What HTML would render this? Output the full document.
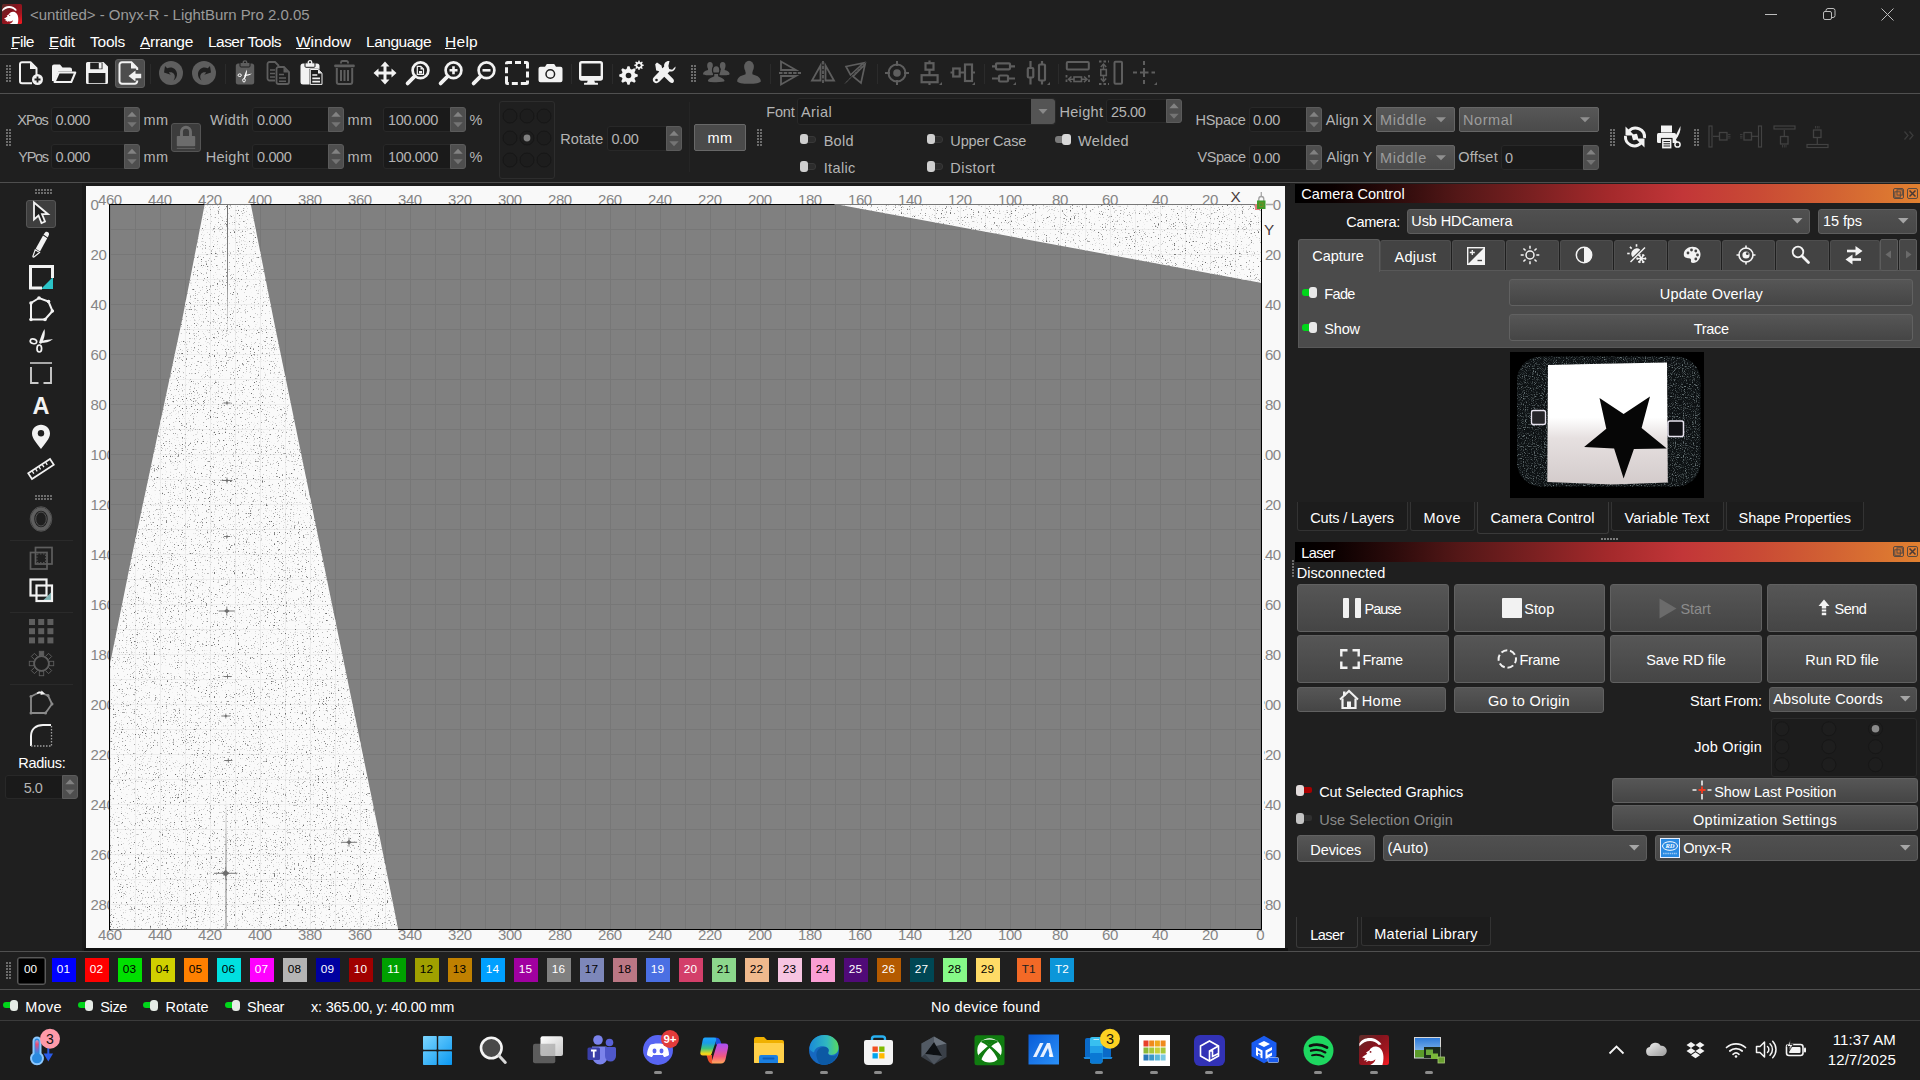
<!DOCTYPE html>
<html><head><meta charset="utf-8"><title>LightBurn</title>
<style>
html,body{margin:0;padding:0;background:#1f1f1f;}
body{width:1920px;height:1080px;position:relative;overflow:hidden;font-family:"Liberation Sans",sans-serif;}
#root{position:absolute;left:0;top:0;width:1920px;height:1080px;overflow:hidden;background:#1f1f1f;}
#root div,#root span.t,#root svg{position:absolute;box-sizing:border-box;}
span.t{white-space:nowrap;display:block;}
#root svg{overflow:visible;}
.hl{background:#505050;height:1px;}
.inp{background:#1a1a1a;border:1px solid #282828;border-radius:3px;}
.spin{background:#484848;border-radius:0 3px 3px 0;}
.btn{background:#444444;border:1px solid #5c5c5c;border-radius:2px;}
.cmb{background:#4a4a4a;border:1px solid #5a5a5a;border-radius:2px;}
</style></head><body><div id="root">

<span class="t" style="left:30px;top:4.50px;height:20px;line-height:20px;font-size:15px;color:#9a9a9a;letter-spacing:-0.035px;">&lt;untitled&gt; - Onyx-R - LightBurn Pro 2.0.05</span>
<svg style="left:1760px;top:4px" width="150" height="22" viewBox="0 0 150 22"><g stroke="#bdbdbd" stroke-width="1" fill="none"><path d="M5 10.5h12"/><rect x="63.5" y="7.5" width="8" height="8" rx="1.5"/><path d="M66 7.5v-1a2 2 0 0 1 2-2h5a2 2 0 0 1 2 2v5a2 2 0 0 1-2 2h-1"/><path d="M121.5 4.5l12 12M133.5 4.5l-12 12"/></g></svg>
<svg style="left:2px;top:4px;" width="20" height="20" viewBox="0 0 20 20"><defs><linearGradient id="lbg1" x1="0" y1="0" x2="1" y2="1"><stop offset="0" stop-color="#5c2e2a"/><stop offset="0.4" stop-color="#84141e"/><stop offset="0.7" stop-color="#a4161f"/><stop offset="1" stop-color="#ff1a22"/></linearGradient></defs><rect x="0" y="0" width="20" height="20" rx="1.500" fill="url(#lbg1)"/><path d="M0.200 5.800C2.500 1 11 0.300 15 6.200L13.200 6.700C10 2.800 4 3 0.300 7.500z" fill="#fff"/><path d="M2 14.800l3.500-2.300-0.800-0.800 2.300-1.500c0.500-1.500 2.500-2.800 4.500-2.500 3.500 0.500 5 4 4.800 8 0 1.500-0.300 3-0.700 4.300H7.500c2-1 3.200-2 3.500-3.800-1.500 1.200-3 1.500-4.500 1l-1.800 0.800 0.500-1.300-2 0.300 1-1.300z" fill="#fff"/><circle cx="7.700" cy="11.300" r="0.600" fill="#8a1520"/></svg>
<span class="t" style="left:11px;top:31.50px;height:20px;line-height:20px;font-size:15.5px;color:#ffffff;letter-spacing:-0.494px;">File</span>
<span class="t" style="left:49px;top:31.50px;height:20px;line-height:20px;font-size:15.5px;color:#ffffff;letter-spacing:-0.177px;">Edit</span>
<span class="t" style="left:90px;top:31.50px;height:20px;line-height:20px;font-size:15.5px;color:#ffffff;letter-spacing:-0.237px;">Tools</span>
<span class="t" style="left:140px;top:31.50px;height:20px;line-height:20px;font-size:15.5px;color:#ffffff;letter-spacing:-0.306px;">Arrange</span>
<span class="t" style="left:208px;top:31.50px;height:20px;line-height:20px;font-size:15.5px;color:#ffffff;letter-spacing:-0.543px;">Laser Tools</span>
<span class="t" style="left:296px;top:31.50px;height:20px;line-height:20px;font-size:15.5px;color:#ffffff;letter-spacing:-0.021px;">Window</span>
<span class="t" style="left:366px;top:31.50px;height:20px;line-height:20px;font-size:15.5px;color:#ffffff;letter-spacing:-0.494px;">Language</span>
<span class="t" style="left:445px;top:31.50px;height:20px;line-height:20px;font-size:15.5px;color:#ffffff;letter-spacing:0.281px;">Help</span>
<div style="left:11px;top:48px;width:7px;height:1px;background:#fff;"></div>
<div style="left:49px;top:48px;width:9px;height:1px;background:#fff;"></div>
<div style="left:140px;top:48px;width:10px;height:1px;background:#fff;"></div>
<div style="left:296px;top:48px;width:14px;height:1px;background:#fff;"></div>
<div style="left:445px;top:48px;width:11px;height:1px;background:#fff;"></div>
<div class="hl" style="left:0px;top:54px;width:1920px;height:1px;"></div>
<div class="hl" style="left:0px;top:93px;width:1920px;height:1px;"></div>
<div style="left:0px;top:182px;width:1920px;height:1.3px;background:#4e4e4e;"></div>
<svg style="left:6px;top:65px;" width="6" height="18" viewBox="0 0 6 18"><rect x="0" y="0" width="2" height="2" fill="#6c6c6c"/><rect x="3" y="0" width="2" height="2" fill="#6c6c6c"/><rect x="0" y="3" width="2" height="2" fill="#6c6c6c"/><rect x="3" y="3" width="2" height="2" fill="#6c6c6c"/><rect x="0" y="6" width="2" height="2" fill="#6c6c6c"/><rect x="3" y="6" width="2" height="2" fill="#6c6c6c"/><rect x="0" y="9" width="2" height="2" fill="#6c6c6c"/><rect x="3" y="9" width="2" height="2" fill="#6c6c6c"/><rect x="0" y="12" width="2" height="2" fill="#6c6c6c"/><rect x="3" y="12" width="2" height="2" fill="#6c6c6c"/><rect x="0" y="15" width="2" height="2" fill="#6c6c6c"/><rect x="3" y="15" width="2" height="2" fill="#6c6c6c"/></svg>
<svg style="left:19px;top:61px;" width="24" height="24" viewBox="0 0 24 24"><path d="M3 1.2h8.5l6 6v8" fill="none" stroke="#f2f2f2" stroke-width="2" stroke-linejoin="round"/><path d="M3 1.2a2 2 0 0 0-2 2v17a2 2 0 0 0 2 2h10" fill="none" stroke="#f2f2f2" stroke-width="2"/><path d="M11 1.5v6.5h6.5z" fill="#f2f2f2"/><circle cx="18.5" cy="18.5" r="5.5" fill="#f2f2f2"/><path d="M18.5 15.5v6M15.5 18.5h6" stroke="#1f1f1f" stroke-width="1.8"/></svg>
<svg style="left:51px;top:61px;" width="26" height="24" viewBox="0 0 26 24"><path d="M1 20V5.5a2 2 0 0 1 2-2h6l2.5 3H19a2 2 0 0 1 2 2v2H7.5L3.5 20z" fill="#f2f2f2"/><path d="M7.8 11.5H24.3L20.3 21H3.5z" fill="none" stroke="#f2f2f2" stroke-width="2" stroke-linejoin="round"/></svg>
<svg style="left:85px;top:61px;" width="24" height="24" viewBox="0 0 24 24"><path d="M1 2.5a1.5 1.5 0 0 1 1.5-1.5H18.5L23 5.5V21.5a1.5 1.5 0 0 1-1.5 1.5H2.5A1.5 1.5 0 0 1 1 21.500z" fill="#f2f2f2"/><rect x="5.2" y="1.6" width="12.3" height="6.6" fill="#1f1f1f"/><rect x="13.8" y="2" width="2.8" height="5.6" fill="#f2f2f2"/><rect x="3.6" y="12" width="16.8" height="10.2" fill="#1f1f1f"/></svg>
<div style="left:115px;top:59px;width:30px;height:29px;background:#4d4d4d;border:1px solid #5e5e5e;border-radius:3px;"></div>
<svg style="left:118px;top:61px;" width="24" height="24" viewBox="0 0 24 24"><path d="M19.2 9V7.2L13.400 1.2H4a2.500 2.500 0 0 0-2.500 2.500v16.600a2.500 2.500 0 0 0 2.500 2.500h12.700a2.500 2.500 0 0 0 2.500-2.500v-0.800" fill="none" stroke="#f2f2f2" stroke-width="2"/><path d="M13 1.5v6h6z" fill="#f2f2f2"/><path d="M10.500 15l7-5.500v3.300h5.700v4.400h-5.700v3.300z" fill="#f2f2f2"/></svg>
<div style="left:150px;top:64px;width:1px;height:20px;background:#2b2b2b;"></div>
<svg style="left:159px;top:61px;" width="24" height="24" viewBox="0 0 24 24"><circle cx="12" cy="12" r="12" fill="#5e5e5e"/><path d="M5 11.500l1-6.500 2.200 2.300c4.500-2.300 9.500 0.500 9.800 5.500 0.200 3-1.300 5.300-3.500 6.700 1.500-2 1.800-4.500 0.500-6.400-1.200-1.700-3.300-2.300-5.200-1.500l2 2.200z" fill="#1f1f1f"/></svg>
<svg style="left:192px;top:61px;" width="24" height="24" viewBox="0 0 24 24"><circle cx="12" cy="12" r="12" fill="#5e5e5e"/><path d="M19 11.500l-1-6.500-2.200 2.300c-4.500-2.300-9.500 0.500-9.800 5.500-0.200 3 1.300 5.300 3.500 6.700-1.500-2-1.800-4.500-0.500-6.400 1.200-1.700 3.300-2.300 5.200-1.500l-2 2.200z" fill="#1f1f1f"/></svg>
<div style="left:225px;top:64px;width:1px;height:20px;background:#2b2b2b;"></div>
<svg style="left:235px;top:60px;" width="20" height="25" viewBox="0 0 20 25"><rect x="0.8" y="3.5" width="18.400" height="21" rx="2.500" fill="#5e5e5e"/><rect x="5" y="2.500" width="10" height="4.500" rx="1" fill="#5e5e5e" stroke="#1f1f1f" stroke-width="1"/><circle cx="10" cy="2.600" r="1.800" fill="none" stroke="#5e5e5e" stroke-width="1.300"/><path d="M11.800 9.500c0.500 3-0.500 7-2 9.500l-1-0.500c0.800-3 1.500-6 3-9z" fill="#fff"/><path d="M17 13.500c-2.500 1.800-5 2.500-7.500 2.500l0.200-1c2.500-0.500 5-1 7.300-1.500z" fill="#fff"/><ellipse cx="4.700" cy="15.200" rx="1.700" ry="1.300" fill="none" stroke="#fff" stroke-width="1"/><ellipse cx="9" cy="20.300" rx="1.300" ry="1.700" fill="none" stroke="#fff" stroke-width="1"/></svg>
<svg style="left:266px;top:61px;" width="24" height="24" viewBox="0 0 24 24"><g fill="none" stroke="#5e5e5e" stroke-width="1.800"><path d="M9 19.500H3.500a2 2 0 0 1-2-2V3a2 2 0 0 1 2-2H9l4 4"/><path d="M12.500 6h5.500l5 5v10a2 2 0 0 1-2 2h-8.500a2 2 0 0 1-2-2V8a2 2 0 0 1 2-2z" fill="#1f1f1f"/></g><path d="M17.500 6.500v5h5z" fill="#5e5e5e"/><path d="M4 9h5M4 12.500h5M4 16h5M13 13.500h5M13 17h7M13 20.300h7" stroke="#5e5e5e" stroke-width="1.600"/></svg>
<svg style="left:300px;top:60px;" width="23" height="25" viewBox="0 0 23 25"><rect x="0.500" y="3.500" width="19" height="21" rx="2.500" fill="#f2f2f2"/><rect x="5" y="2.800" width="10" height="4.500" rx="1" fill="#f2f2f2" stroke="#1f1f1f" stroke-width="1"/><circle cx="10" cy="2.500" r="1.800" fill="none" stroke="#f2f2f2" stroke-width="1.300"/><path d="M10.300 9.500h8l3.700 3.700v11.200h-11.700z" fill="#1f1f1f" stroke="#1f1f1f" stroke-width="1.600"/><path d="M10.300 9.500h8l3.700 3.700v11.200h-11.700z" fill="#1f1f1f" stroke="#f2f2f2" stroke-width="1" stroke-linejoin="round"/><path d="M18 9.500v4h4z" fill="#f2f2f2"/><path d="M12.300 15h5M12.300 18.300h7.700M12.300 21.600h7.700" stroke="#f2f2f2" stroke-width="1.700"/></svg>
<svg style="left:334px;top:60px;" width="21" height="25" viewBox="0 0 21 25"><path d="M7 3.500V2.500a1.500 1.500 0 0 1 1.500-1.500h4a1.500 1.500 0 0 1 1.500 1.500v1" fill="none" stroke="#5e5e5e" stroke-width="1.800"/><rect x="0.300" y="4.500" width="20.400" height="2.800" rx="0.800" fill="#5e5e5e"/><path d="M2.800 8v14a2 2 0 0 0 2 2h11.400a2 2 0 0 0 2-2V8" fill="none" stroke="#5e5e5e" stroke-width="2"/><path d="M7 10v11M10.500 10v11M14 10v11" stroke="#5e5e5e" stroke-width="2"/></svg>
<svg style="left:373px;top:61px;" width="24" height="24" viewBox="0 0 24 24"><path d="M12 0.500l4.500 5h-3v5h5v-3l5 4.500-5 4.500v-3h-5v5h3l-4.500 5-4.500-5h3v-5h-5v3l-5-4.500 5-4.500v3h5v-5h-3z" fill="#f2f2f2"/></svg>
<svg style="left:405px;top:60px;" width="26" height="26" viewBox="0 0 26 26"><circle cx="15.500" cy="10.300" r="7.900" fill="none" stroke="#f2f2f2" stroke-width="2.700"/><path d="M9.600 16.400l-7 7" stroke="#f2f2f2" stroke-width="3.800" stroke-linecap="round"/><path d="M12.300 6.300h3.500l2.700 2.700v5.300h-6.200z" fill="none" stroke="#f2f2f2" stroke-width="1.200"/><path d="M15.500 6.500v3h3zM14 11h3v2.500h-3z" fill="#f2f2f2"/></svg>
<svg style="left:438px;top:60px;" width="26" height="26" viewBox="0 0 26 26"><circle cx="15.500" cy="10.300" r="7.900" fill="none" stroke="#f2f2f2" stroke-width="2.700"/><path d="M9.600 16.400l-7 7" stroke="#f2f2f2" stroke-width="3.800" stroke-linecap="round"/><path d="M15.500 6.300v8M11.500 10.300h8" stroke="#f2f2f2" stroke-width="2.600"/></svg>
<svg style="left:471px;top:60px;" width="26" height="26" viewBox="0 0 26 26"><circle cx="15.500" cy="10.300" r="7.900" fill="none" stroke="#f2f2f2" stroke-width="2.700"/><path d="M9.600 16.400l-7 7" stroke="#f2f2f2" stroke-width="3.800" stroke-linecap="round"/><path d="M11.500 10.300h8" stroke="#f2f2f2" stroke-width="2.600"/></svg>
<svg style="left:504.7px;top:60.8px;" width="24" height="24" viewBox="0 0 24 24"><rect x="1.500" y="1.500" width="21" height="21" rx="1" fill="none" stroke="#f2f2f2" stroke-width="3" stroke-dasharray="9 3 6 3" stroke-dashoffset="4.500"/></svg>
<svg style="left:538px;top:63px;" width="25" height="20" viewBox="0 0 25 20"><path d="M2.500 3.800h4.500l1.800-2.800h7.400l1.800 2.800h4.500a2 2 0 0 1 2 2v11.400a2 2 0 0 1-2 2h-20a2 2 0 0 1-2-2V5.800a2 2 0 0 1 2-2z" fill="#f2f2f2"/><circle cx="12.300" cy="11" r="4.300" fill="none" stroke="#1f1f1f" stroke-width="1.500"/></svg>
<div style="left:571px;top:64px;width:1px;height:20px;background:#2b2b2b;"></div>
<svg style="left:579px;top:61px;" width="24" height="25" viewBox="0 0 24 25"><rect x="1.200" y="1.200" width="21.600" height="17.300" rx="1.500" fill="none" stroke="#f2f2f2" stroke-width="2.400"/><rect x="1" y="15" width="22" height="3.500" fill="#f2f2f2"/><path d="M9 18.500h6l1 3.500h-8z" fill="#f2f2f2"/><rect x="5" y="21.800" width="14" height="2" rx="0.500" fill="#f2f2f2"/></svg>
<div style="left:612px;top:64px;width:1px;height:20px;background:#2b2b2b;"></div>
<svg style="left:619px;top:60px;" width="26" height="26" viewBox="0 0 26 26"><polygon points="18.75,14.50 18.75,16.50 16.03,17.41 15.47,18.76 16.75,21.33 15.33,22.75 12.76,21.47 11.41,22.03 10.50,24.75 8.50,24.75 7.59,22.03 6.24,21.47 3.67,22.75 2.25,21.33 3.53,18.76 2.97,17.41 0.25,16.50 0.25,14.50 2.97,13.59 3.53,12.24 2.25,9.67 3.67,8.25 6.24,9.53 7.59,8.97 8.50,6.25 10.50,6.25 11.41,8.97 12.76,9.53 15.33,8.25 16.75,9.67 15.47,12.24 16.03,13.59" fill="#f2f2f2"/><circle cx="9.5" cy="15.5" r="2.8" fill="#1f1f1f"/><polygon points="24.77,4.78 24.77,5.82 23.26,6.25 22.98,6.93 23.74,8.31 23.01,9.04 21.63,8.28 20.95,8.56 20.52,10.07 19.48,10.07 19.05,8.56 18.37,8.28 16.99,9.04 16.26,8.31 17.02,6.93 16.74,6.25 15.23,5.82 15.23,4.78 16.74,4.35 17.02,3.67 16.26,2.29 16.99,1.56 18.37,2.32 19.05,2.04 19.48,0.53 20.52,0.53 20.95,2.04 21.63,2.32 23.01,1.56 23.74,2.29 22.98,3.67 23.26,4.35" fill="#f2f2f2"/><circle cx="20" cy="5.3" r="1.6" fill="#1f1f1f"/></svg>
<svg style="left:652px;top:60px;" width="26" height="26" viewBox="0 0 26 26"><path d="M3.200 4.200l1.800-1.800 4.500 3 0.500 2.300 10.500 10.500c1.500 1.500 2 3 0.800 4.200s-2.800 0.700-4.200-0.800L6.500 11l-2.300-0.500z" fill="#f2f2f2"/><path d="M17.500 1c-3-0.500-6 2-5.300 5.500L1.800 17.300c-1.500 1.500-1.300 3.700 0.200 5s3.500 1.300 5-0.200L17.500 11.500c3.500 0.700 6.300-2 6-5l-3.300 3.300-3-0.800-0.800-3z" fill="#f2f2f2"/><circle cx="4.500" cy="20" r="1.300" fill="#1f1f1f"/></svg>
<svg style="left:691px;top:65px;" width="6" height="18" viewBox="0 0 6 18"><rect x="0" y="0" width="2" height="2" fill="#6c6c6c"/><rect x="3" y="0" width="2" height="2" fill="#6c6c6c"/><rect x="0" y="3" width="2" height="2" fill="#6c6c6c"/><rect x="3" y="3" width="2" height="2" fill="#6c6c6c"/><rect x="0" y="6" width="2" height="2" fill="#6c6c6c"/><rect x="3" y="6" width="2" height="2" fill="#6c6c6c"/><rect x="0" y="9" width="2" height="2" fill="#6c6c6c"/><rect x="3" y="9" width="2" height="2" fill="#6c6c6c"/><rect x="0" y="12" width="2" height="2" fill="#6c6c6c"/><rect x="3" y="12" width="2" height="2" fill="#6c6c6c"/><rect x="0" y="15" width="2" height="2" fill="#6c6c6c"/><rect x="3" y="15" width="2" height="2" fill="#6c6c6c"/></svg>
<svg style="left:703px;top:60px;" width="26" height="26" viewBox="0 0 26 26"><ellipse cx="7" cy="5.630000000000001" rx="2.838" ry="3.6300000000000003" fill="#5e5e5e"/><path d="M5.02 7.94v1.98c-1.98 0.66 -4.62 1.32 -4.95 3.96c0 1.98 13.860000000000001 1.98 13.860000000000001 0c-0.33 -2.64 -2.97 -3.3000000000000003 -4.95 -3.96v-1.98z" fill="#5e5e5e"/><ellipse cx="19.7" cy="5.630000000000001" rx="2.838" ry="3.6300000000000003" fill="#5e5e5e"/><path d="M17.72 7.94v1.98c-1.98 0.66 -4.62 1.32 -4.95 3.96c0 1.98 13.860000000000001 1.98 13.860000000000001 0c-0.33 -2.64 -2.97 -3.3000000000000003 -4.95 -3.96v-1.98z" fill="#5e5e5e"/><g stroke="#1f1f1f" stroke-width="1.300"><ellipse cx="13.2" cy="10.23" rx="3.698" ry="4.7299999999999995" fill="#5e5e5e"/><path d="M10.62 13.24v2.58c-2.58 0.86 -6.02 1.72 -6.45 5.16c0 2.58 18.06 2.58 18.06 0c-0.43 -3.44 -3.87 -4.3 -6.45 -5.16v-2.58z" fill="#5e5e5e"/></g></svg>
<svg style="left:738px;top:60px;" width="22" height="26" viewBox="0 0 22 26"><ellipse cx="11" cy="7.015" rx="4.858999999999999" ry="6.215" fill="#5e5e5e"/><path d="M7.61 10.969999999999999v3.3899999999999997c-3.3899999999999997 1.13 -7.909999999999999 2.26 -8.475 6.779999999999999c0 3.3899999999999997 23.729999999999997 3.3899999999999997 23.729999999999997 0c-0.565 -4.52 -5.084999999999999 -5.6499999999999995 -8.475 -6.779999999999999v-3.3899999999999997z" fill="#5e5e5e"/></svg>
<div style="left:770px;top:64px;width:1px;height:20px;background:#2b2b2b;"></div>
<svg style="left:779px;top:60px;" width="22" height="26" viewBox="0 0 22 26"><g fill="none" stroke="#5e5e5e" stroke-width="1.800" stroke-linejoin="miter"><path d="M2 1.500v8.500h15z"/><path d="M2 24.500v-8.500h15z"/></g><path d="M0 13h22" stroke="#5e5e5e" stroke-width="1.800" stroke-dasharray="3.500 1.200"/></svg>
<svg style="left:810px;top:61px;" width="26" height="22" viewBox="0 0 26 22"><g fill="none" stroke="#5e5e5e" stroke-width="1.800"><path d="M2 19.500h8.500v-15z"/><path d="M24 19.500h-8.500v-15z"/></g><path d="M13 0v22" stroke="#5e5e5e" stroke-width="1.800" stroke-dasharray="3.500 1.200"/></svg>
<svg style="left:844px;top:61px;" width="24" height="24" viewBox="0 0 24 24"><g fill="none" stroke="#5e5e5e" stroke-width="1.700"><path d="M2 5.500l17.500-3.500-13 12z"/><path d="M21 3.500l-4 18.500-8-6.500z"/></g><path d="M1 22.500L22 1" stroke="#5e5e5e" stroke-width="1" /><path d="M1 22.500L22 1" stroke="#1f1f1f" stroke-width="0.600" stroke-dasharray="2 2"/></svg>
<div style="left:877px;top:64px;width:1px;height:20px;background:#2b2b2b;"></div>
<svg style="left:885px;top:61px;" width="24" height="24" viewBox="0 0 24 24"><circle cx="12" cy="12" r="8.500" fill="none" stroke="#5e5e5e" stroke-width="2"/><circle cx="12" cy="12" r="3.800" fill="#5e5e5e"/><path d="M12 0v5M12 19v5M0 12h5M19 12h5" stroke="#5e5e5e" stroke-width="2"/></svg>
<svg style="left:920px;top:60px;" width="24" height="26" viewBox="0 0 24 26"><g fill="none" stroke="#5e5e5e" stroke-width="2.200"><rect x="5.500" y="3.200" width="8" height="6.500"/><rect x="1.600" y="15.200" width="16" height="7"/></g><path d="M9.500 0.500v3M9.500 9.500v6M9.500 22v3" stroke="#5e5e5e" stroke-width="2.200"/><path d="M22 25l-3 0 3-3z" fill="#5e5e5e"/></svg>
<svg style="left:950px;top:60px;" width="26" height="26" viewBox="0 0 26 26"><g fill="none" stroke="#5e5e5e" stroke-width="2.200"><rect x="3.200" y="8.500" width="6.500" height="8"/><rect x="15" y="4.500" width="7" height="16.500"/></g><path d="M0.500 12.500h3M9.500 12.500h6M22 12.500h3" stroke="#5e5e5e" stroke-width="2.200"/><path d="M25 25l-3 0 3-3z" fill="#5e5e5e"/></svg>
<div style="left:984px;top:64px;width:1px;height:20px;background:#2b2b2b;"></div>
<svg style="left:991px;top:60px;" width="26" height="26" viewBox="0 0 26 26"><g fill="none" stroke="#5e5e5e" stroke-width="2.200"><rect x="5" y="3.300" width="14" height="6" rx="1"/><rect x="8" y="15.500" width="9" height="6" rx="1"/></g><path d="M1 6.300h4M19 6.300h5M1 18.500h7M17 18.500h7" stroke="#5e5e5e" stroke-width="2.200"/><path d="M25 25l-3 0 3-3z" fill="#5e5e5e"/></svg>
<svg style="left:1025px;top:60px;" width="26" height="26" viewBox="0 0 26 26"><g fill="none" stroke="#5e5e5e" stroke-width="2.200"><rect x="2.800" y="8" width="5.500" height="9.500" rx="1"/><rect x="14" y="4.500" width="6" height="16" rx="1"/></g><path d="M5.500 1v7M5.500 17.500v7M17 1v3.500M17 20.500v4" stroke="#5e5e5e" stroke-width="2.200"/><path d="M25 25l-3 0 3-3z" fill="#5e5e5e"/></svg>
<div style="left:1058px;top:64px;width:1px;height:20px;background:#2b2b2b;"></div>
<svg style="left:1065px;top:60px;" width="26" height="26" viewBox="0 0 26 26"><rect x="1.800" y="2" width="22" height="7.500" rx="1" fill="none" stroke="#5e5e5e" stroke-width="2"/><path d="M1.500 15v9M24 15v9" stroke="#5e5e5e" stroke-width="1.800" stroke-dasharray="2.500 2"/><rect x="9" y="17" width="7.500" height="4.500" fill="none" stroke="#5e5e5e" stroke-width="1.600"/><path d="M9 19.300H4M16.500 19.300h5" stroke="#5e5e5e" stroke-width="1.500"/><path d="M6.500 16.500l-3 2.800 3 2.800M19 16.500l3 2.800-3 2.800" fill="none" stroke="#5e5e5e" stroke-width="1.500"/></svg>
<svg style="left:1098px;top:60px;" width="26" height="26" viewBox="0 0 26 26"><rect x="16.500" y="1.800" width="7.500" height="22" rx="1" fill="none" stroke="#5e5e5e" stroke-width="2"/><path d="M1 1.500h10M1 24h10" stroke="#5e5e5e" stroke-width="1.800" stroke-dasharray="2.500 2"/><rect x="2.800" y="9.500" width="5.500" height="6" fill="none" stroke="#5e5e5e" stroke-width="1.600"/><path d="M5.500 9.500V4.500M5.500 15.500v5" stroke="#5e5e5e" stroke-width="1.500"/><path d="M2.800 7l2.700-3 2.700 3M2.800 18.500l2.700 3 2.700-3" fill="none" stroke="#5e5e5e" stroke-width="1.500"/></svg>
<svg style="left:1132px;top:60px;" width="26" height="26" viewBox="0 0 26 26"><path d="M12 1v4M12 8v9M12 20v4M1 12.500h4M8 12.500h8.500M19.500 12.500h3.500" stroke="#5e5e5e" stroke-width="2"/><path d="M25 25l-3 0 3-3z" fill="#5e5e5e"/></svg>
<svg style="left:6px;top:129px;" width="6" height="18" viewBox="0 0 6 18"><rect x="0" y="0" width="2" height="2" fill="#6c6c6c"/><rect x="3" y="0" width="2" height="2" fill="#6c6c6c"/><rect x="0" y="3" width="2" height="2" fill="#6c6c6c"/><rect x="3" y="3" width="2" height="2" fill="#6c6c6c"/><rect x="0" y="6" width="2" height="2" fill="#6c6c6c"/><rect x="3" y="6" width="2" height="2" fill="#6c6c6c"/><rect x="0" y="9" width="2" height="2" fill="#6c6c6c"/><rect x="3" y="9" width="2" height="2" fill="#6c6c6c"/><rect x="0" y="12" width="2" height="2" fill="#6c6c6c"/><rect x="3" y="12" width="2" height="2" fill="#6c6c6c"/><rect x="0" y="15" width="2" height="2" fill="#6c6c6c"/><rect x="3" y="15" width="2" height="2" fill="#6c6c6c"/></svg>
<span class="t" style="left:17.3px;top:109.50px;height:20px;line-height:20px;font-size:14.5px;color:#b4b4b4;letter-spacing:-1.039px;">XPos</span>
<span class="t" style="left:18.3px;top:146.50px;height:20px;line-height:20px;font-size:14.5px;color:#b4b4b4;letter-spacing:-1.289px;">YPos</span>
<div class="inp" style="left:50.5px;top:106.5px;width:89.5px;height:25.0px;"></div>
<div style="left:124px;top:106.5px;width:16px;height:25.0px;background:#4e4e4e;border:1px solid #5b5b5b;border-radius:0 3px 3px 0;"></div>
<svg style="left:124px;top:106.5px;" width="16" height="25.0" viewBox="0 0 16 25.0"><path d="M3.300 9.8l4.700-5 4.700 5z" fill="#828282"/><path d="M3.300 15.2l4.700 5 4.700-5z" fill="#747474"/></svg>
<span class="t" style="left:55.5px;top:109.50px;height:20px;line-height:20px;font-size:14.5px;color:#b4b4b4;letter-spacing:-0.356px;">0.000</span>
<div class="inp" style="left:50.5px;top:143.5px;width:89.5px;height:25.0px;"></div>
<div style="left:124px;top:143.5px;width:16px;height:25.0px;background:#4e4e4e;border:1px solid #5b5b5b;border-radius:0 3px 3px 0;"></div>
<svg style="left:124px;top:143.5px;" width="16" height="25.0" viewBox="0 0 16 25.0"><path d="M3.300 9.8l4.700-5 4.700 5z" fill="#828282"/><path d="M3.300 15.2l4.700 5 4.700-5z" fill="#747474"/></svg>
<span class="t" style="left:55.5px;top:146.50px;height:20px;line-height:20px;font-size:14.5px;color:#b4b4b4;letter-spacing:-0.356px;">0.000</span>
<span class="t" style="left:143.6px;top:109.50px;height:20px;line-height:20px;font-size:14.5px;color:#b4b4b4;letter-spacing:0.322px;">mm</span>
<span class="t" style="left:143.6px;top:146.50px;height:20px;line-height:20px;font-size:14.5px;color:#b4b4b4;letter-spacing:0.322px;">mm</span>
<div style="left:171px;top:123px;width:30px;height:29px;background:#3c3c3c;border:1px solid #545454;border-radius:3px;"></div>
<svg style="left:176px;top:124px;" width="20" height="26" viewBox="0 0 20 26"><path d="M5.500 12.500V7.800a4.500 4.500 0 0 1 9 0v4.700" fill="none" stroke="#6c6c6c" stroke-width="2.900"/><rect x="0.800" y="12" width="18.400" height="10.300" rx="0.800" fill="#6c6c6c"/><rect x="0.800" y="23.800" width="18.400" height="1.100" fill="#626262"/></svg>
<span class="t" style="left:210px;top:109.50px;height:20px;line-height:20px;font-size:14.5px;color:#b4b4b4;letter-spacing:0.467px;">Width</span>
<span class="t" style="left:205.7px;top:146.50px;height:20px;line-height:20px;font-size:14.5px;color:#b4b4b4;letter-spacing:0.298px;">Height</span>
<div class="inp" style="left:252px;top:106.5px;width:92px;height:25.0px;"></div>
<div style="left:328px;top:106.5px;width:16px;height:25.0px;background:#4e4e4e;border:1px solid #5b5b5b;border-radius:0 3px 3px 0;"></div>
<svg style="left:328px;top:106.5px;" width="16" height="25.0" viewBox="0 0 16 25.0"><path d="M3.300 9.8l4.700-5 4.700 5z" fill="#828282"/><path d="M3.300 15.2l4.700 5 4.700-5z" fill="#747474"/></svg>
<span class="t" style="left:257px;top:109.50px;height:20px;line-height:20px;font-size:14.5px;color:#b4b4b4;letter-spacing:-0.356px;">0.000</span>
<div class="inp" style="left:252px;top:143.5px;width:92px;height:25.0px;"></div>
<div style="left:328px;top:143.5px;width:16px;height:25.0px;background:#4e4e4e;border:1px solid #5b5b5b;border-radius:0 3px 3px 0;"></div>
<svg style="left:328px;top:143.5px;" width="16" height="25.0" viewBox="0 0 16 25.0"><path d="M3.300 9.8l4.700-5 4.700 5z" fill="#828282"/><path d="M3.300 15.2l4.700 5 4.700-5z" fill="#747474"/></svg>
<span class="t" style="left:257px;top:146.50px;height:20px;line-height:20px;font-size:14.5px;color:#b4b4b4;letter-spacing:-0.356px;">0.000</span>
<span class="t" style="left:347.5px;top:109.50px;height:20px;line-height:20px;font-size:14.5px;color:#b4b4b4;letter-spacing:0.322px;">mm</span>
<span class="t" style="left:347.5px;top:146.50px;height:20px;line-height:20px;font-size:14.5px;color:#b4b4b4;letter-spacing:0.322px;">mm</span>
<div class="inp" style="left:382.5px;top:106.5px;width:83.5px;height:25.0px;"></div>
<div style="left:450px;top:106.5px;width:16px;height:25.0px;background:#4e4e4e;border:1px solid #5b5b5b;border-radius:0 3px 3px 0;"></div>
<svg style="left:450px;top:106.5px;" width="16" height="25.0" viewBox="0 0 16 25.0"><path d="M3.300 9.8l4.700-5 4.700 5z" fill="#828282"/><path d="M3.300 15.2l4.700 5 4.700-5z" fill="#747474"/></svg>
<span class="t" style="left:388px;top:109.50px;height:20px;line-height:20px;font-size:14.5px;color:#b4b4b4;letter-spacing:-0.344px;">100.000</span>
<div class="inp" style="left:382.5px;top:143.5px;width:83.5px;height:25.0px;"></div>
<div style="left:450px;top:143.5px;width:16px;height:25.0px;background:#4e4e4e;border:1px solid #5b5b5b;border-radius:0 3px 3px 0;"></div>
<svg style="left:450px;top:143.5px;" width="16" height="25.0" viewBox="0 0 16 25.0"><path d="M3.300 9.8l4.700-5 4.700 5z" fill="#828282"/><path d="M3.300 15.2l4.700 5 4.700-5z" fill="#747474"/></svg>
<span class="t" style="left:388px;top:146.50px;height:20px;line-height:20px;font-size:14.5px;color:#b4b4b4;letter-spacing:-0.344px;">100.000</span>
<span class="t" style="left:469.4px;top:109.50px;height:20px;line-height:20px;font-size:14.5px;color:#b4b4b4;letter-spacing:-0.25px;">%</span>
<span class="t" style="left:469.4px;top:146.50px;height:20px;line-height:20px;font-size:14.5px;color:#b4b4b4;letter-spacing:-0.25px;">%</span>
<div style="left:499px;top:101px;width:56px;height:78px;border:1px solid #2d2d2d;border-radius:3px;"></div>
<svg style="left:499px;top:101px;" width="56" height="78" viewBox="0 0 56 78"><circle cx="11" cy="15" r="7" fill="#1d1d1d" stroke="#161616" stroke-width="1"/><circle cx="28" cy="15" r="7" fill="#1d1d1d" stroke="#161616" stroke-width="1"/><circle cx="45" cy="15" r="7" fill="#1d1d1d" stroke="#161616" stroke-width="1"/><circle cx="11" cy="37" r="7" fill="#1d1d1d" stroke="#161616" stroke-width="1"/><circle cx="28" cy="37" r="7" fill="#1d1d1d" stroke="#161616" stroke-width="1"/><circle cx="45" cy="37" r="7" fill="#1d1d1d" stroke="#161616" stroke-width="1"/><circle cx="11" cy="59" r="7" fill="#1d1d1d" stroke="#161616" stroke-width="1"/><circle cx="28" cy="59" r="7" fill="#1d1d1d" stroke="#161616" stroke-width="1"/><circle cx="45" cy="59" r="7" fill="#1d1d1d" stroke="#161616" stroke-width="1"/><circle cx="28" cy="37" r="3.400" fill="#808080"/></svg>
<span class="t" style="left:560.3px;top:128.50px;height:20px;line-height:20px;font-size:14.5px;color:#b4b4b4;letter-spacing:0.047px;">Rotate</span>
<div class="inp" style="left:606.5px;top:125.5px;width:75.5px;height:25.0px;"></div>
<div style="left:666px;top:125.5px;width:16px;height:25.0px;background:#4e4e4e;border:1px solid #5b5b5b;border-radius:0 3px 3px 0;"></div>
<svg style="left:666px;top:125.5px;" width="16" height="25.0" viewBox="0 0 16 25.0"><path d="M3.300 9.8l4.700-5 4.700 5z" fill="#828282"/><path d="M3.300 15.2l4.700 5 4.700-5z" fill="#747474"/></svg>
<span class="t" style="left:611.5px;top:128.50px;height:20px;line-height:20px;font-size:14.5px;color:#b4b4b4;letter-spacing:-0.305px;">0.00</span>
<div style="left:689px;top:102px;width:1px;height:70px;background:#252525;"></div>
<div style="left:694px;top:124px;width:52px;height:27px;background:#4a4a4a;border:1px solid #686868;border-radius:2px;"></div>
<span class="t" style="left:707.5px;top:128.30px;height:20px;line-height:20px;font-size:14.5px;color:#ffffff;letter-spacing:0.322px;">mm</span>
<svg style="left:757px;top:129px;" width="6" height="18" viewBox="0 0 6 18"><rect x="0" y="0" width="2" height="2" fill="#6c6c6c"/><rect x="3" y="0" width="2" height="2" fill="#6c6c6c"/><rect x="0" y="3" width="2" height="2" fill="#6c6c6c"/><rect x="3" y="3" width="2" height="2" fill="#6c6c6c"/><rect x="0" y="6" width="2" height="2" fill="#6c6c6c"/><rect x="3" y="6" width="2" height="2" fill="#6c6c6c"/><rect x="0" y="9" width="2" height="2" fill="#6c6c6c"/><rect x="3" y="9" width="2" height="2" fill="#6c6c6c"/><rect x="0" y="12" width="2" height="2" fill="#6c6c6c"/><rect x="3" y="12" width="2" height="2" fill="#6c6c6c"/><rect x="0" y="15" width="2" height="2" fill="#6c6c6c"/><rect x="3" y="15" width="2" height="2" fill="#6c6c6c"/></svg>
<span class="t" style="left:766.2px;top:101.50px;height:20px;line-height:20px;font-size:14.5px;color:#b4b4b4;letter-spacing:-0.153px;">Font</span>
<div class="inp" style="left:797px;top:98px;width:259px;height:27px;"></div>
<div style="left:1031px;top:99px;width:24px;height:25px;background:#545454;border-radius:0 3px 3px 0;"></div>
<svg style="left:1031px;top:98px;" width="24" height="27" viewBox="0 0 24 27"><path d="M7.500 11h9l-4.500 5z" fill="#8a8a8a"/></svg>
<span class="t" style="left:801px;top:101.50px;height:20px;line-height:20px;font-size:14.5px;color:#b4b4b4;letter-spacing:0.399px;">Arial</span>
<span class="t" style="left:1059.4px;top:101.50px;height:20px;line-height:20px;font-size:14.5px;color:#b4b4b4;letter-spacing:0.348px;">Height</span>
<div class="inp" style="left:1106px;top:99px;width:76px;height:24px;"></div>
<div style="left:1166px;top:99px;width:16px;height:24px;background:#4e4e4e;border:1px solid #5b5b5b;border-radius:0 3px 3px 0;"></div>
<svg style="left:1166px;top:99px;" width="16" height="24" viewBox="0 0 16 24"><path d="M3.300 9.3l4.700-5 4.700 5z" fill="#828282"/><path d="M3.300 14.7l4.700 5 4.700-5z" fill="#747474"/></svg>
<span class="t" style="left:1111px;top:101.50px;height:20px;line-height:20px;font-size:14.5px;color:#b4b4b4;letter-spacing:-0.356px;">25.00</span>
<div style="left:804px;top:135.6px;width:12px;height:7.2px;background:#2c2c2c;border:1px solid #383838;border-radius:3px;"></div>
<div style="left:800px;top:133.89999999999998px;width:8.2px;height:10.6px;background:#cfcfcf;border-radius:3px;"></div>
<div style="left:804px;top:163.1px;width:12px;height:7.2px;background:#2c2c2c;border:1px solid #383838;border-radius:3px;"></div>
<div style="left:800px;top:161.39999999999998px;width:8.2px;height:10.6px;background:#cfcfcf;border-radius:3px;"></div>
<div style="left:931.3px;top:135.6px;width:12px;height:7.2px;background:#2c2c2c;border:1px solid #383838;border-radius:3px;"></div>
<div style="left:927.3px;top:133.89999999999998px;width:8.2px;height:10.6px;background:#cfcfcf;border-radius:3px;"></div>
<div style="left:931.3px;top:163.1px;width:12px;height:7.2px;background:#2c2c2c;border:1px solid #383838;border-radius:3px;"></div>
<div style="left:927.3px;top:161.39999999999998px;width:8.2px;height:10.6px;background:#cfcfcf;border-radius:3px;"></div>
<div style="left:1055.2px;top:136.0px;width:12px;height:7px;background:#7a7a7a;border-radius:3px;"></div>
<div style="left:1062.4px;top:134.2px;width:8.2px;height:10.6px;background:#d8d8d8;border-radius:3px;"></div>
<span class="t" style="left:823.7px;top:130.50px;height:20px;line-height:20px;font-size:14.5px;color:#b4b4b4;letter-spacing:0.245px;">Bold</span>
<span class="t" style="left:823.7px;top:158.00px;height:20px;line-height:20px;font-size:14.5px;color:#b4b4b4;letter-spacing:0.364px;">Italic</span>
<span class="t" style="left:950.3px;top:130.50px;height:20px;line-height:20px;font-size:14.5px;color:#b4b4b4;letter-spacing:-0.137px;">Upper Case</span>
<span class="t" style="left:950.3px;top:158.00px;height:20px;line-height:20px;font-size:14.5px;color:#b4b4b4;letter-spacing:0.444px;">Distort</span>
<span class="t" style="left:1078px;top:130.50px;height:20px;line-height:20px;font-size:14.5px;color:#b4b4b4;letter-spacing:0.350px;">Welded</span>
<span class="t" style="left:1195.5px;top:109.50px;height:20px;line-height:20px;font-size:14.5px;color:#b4b4b4;letter-spacing:-0.264px;">HSpace</span>
<span class="t" style="left:1197.5px;top:147.00px;height:20px;line-height:20px;font-size:14.5px;color:#b4b4b4;letter-spacing:-0.464px;">VSpace</span>
<div class="inp" style="left:1248.5px;top:107px;width:73.5px;height:25px;"></div>
<div style="left:1306px;top:107px;width:16px;height:25px;background:#4e4e4e;border:1px solid #5b5b5b;border-radius:0 3px 3px 0;"></div>
<svg style="left:1306px;top:107px;" width="16" height="25" viewBox="0 0 16 25"><path d="M3.300 9.8l4.700-5 4.700 5z" fill="#828282"/><path d="M3.300 15.2l4.700 5 4.700-5z" fill="#747474"/></svg>
<span class="t" style="left:1253px;top:110.00px;height:20px;line-height:20px;font-size:14.5px;color:#b4b4b4;letter-spacing:-0.305px;">0.00</span>
<div class="inp" style="left:1248.5px;top:145px;width:73.5px;height:24.5px;"></div>
<div style="left:1306px;top:145px;width:16px;height:24.5px;background:#4e4e4e;border:1px solid #5b5b5b;border-radius:0 3px 3px 0;"></div>
<svg style="left:1306px;top:145px;" width="16" height="24.5" viewBox="0 0 16 24.5"><path d="M3.300 9.55l4.700-5 4.700 5z" fill="#828282"/><path d="M3.300 14.95l4.700 5 4.700-5z" fill="#747474"/></svg>
<span class="t" style="left:1253px;top:147.75px;height:20px;line-height:20px;font-size:14.5px;color:#b4b4b4;letter-spacing:-0.305px;">0.00</span>
<span class="t" style="left:1325.7px;top:109.50px;height:20px;line-height:20px;font-size:14.5px;color:#b4b4b4;letter-spacing:0.151px;">Align X</span>
<span class="t" style="left:1326.5px;top:147.00px;height:20px;line-height:20px;font-size:14.5px;color:#b4b4b4;letter-spacing:0.046px;">Align Y</span>
<div style="left:1376px;top:106.5px;width:79px;height:25.5px;background:linear-gradient(#575757,#4a4a4a);border:1px solid #666666;border-radius:2px;"></div>
<svg style="left:1435px;top:106.5px;" width="12" height="25.5" viewBox="0 0 12 25.5"><path d="M1 10.25h10l-5 5z" fill="#909090"/></svg>
<span class="t" style="left:1380px;top:109.75px;height:20px;line-height:20px;font-size:14.5px;color:#9c9c9c;letter-spacing:0.715px;">Middle</span>
<div style="left:1376px;top:144.5px;width:79px;height:25.5px;background:linear-gradient(#575757,#4a4a4a);border:1px solid #666666;border-radius:2px;"></div>
<svg style="left:1435px;top:144.5px;" width="12" height="25.5" viewBox="0 0 12 25.5"><path d="M1 10.25h10l-5 5z" fill="#909090"/></svg>
<span class="t" style="left:1380px;top:147.75px;height:20px;line-height:20px;font-size:14.5px;color:#9c9c9c;letter-spacing:0.715px;">Middle</span>
<div style="left:1459px;top:106.5px;width:140px;height:25.5px;background:linear-gradient(#575757,#4a4a4a);border:1px solid #666666;border-radius:2px;"></div>
<svg style="left:1579px;top:106.5px;" width="12" height="25.5" viewBox="0 0 12 25.5"><path d="M1 10.25h10l-5 5z" fill="#909090"/></svg>
<span class="t" style="left:1463px;top:109.75px;height:20px;line-height:20px;font-size:14.5px;color:#9c9c9c;letter-spacing:0.546px;">Normal</span>
<span class="t" style="left:1458.2px;top:147.00px;height:20px;line-height:20px;font-size:14.5px;color:#b4b4b4;letter-spacing:0.214px;">Offset</span>
<div class="inp" style="left:1500.5px;top:145px;width:98.5px;height:24.5px;"></div>
<div style="left:1583px;top:145px;width:16px;height:24.5px;background:#4e4e4e;border:1px solid #5b5b5b;border-radius:0 3px 3px 0;"></div>
<svg style="left:1583px;top:145px;" width="16" height="24.5" viewBox="0 0 16 24.5"><path d="M3.300 9.55l4.700-5 4.700 5z" fill="#828282"/><path d="M3.300 14.95l4.700 5 4.700-5z" fill="#747474"/></svg>
<span class="t" style="left:1505px;top:147.75px;height:20px;line-height:20px;font-size:14.5px;color:#b4b4b4;letter-spacing:-0.25px;">0</span>
<svg style="left:1610px;top:129px;" width="6" height="18" viewBox="0 0 6 18"><rect x="0" y="0" width="2" height="2" fill="#6c6c6c"/><rect x="3" y="0" width="2" height="2" fill="#6c6c6c"/><rect x="0" y="3" width="2" height="2" fill="#6c6c6c"/><rect x="3" y="3" width="2" height="2" fill="#6c6c6c"/><rect x="0" y="6" width="2" height="2" fill="#6c6c6c"/><rect x="3" y="6" width="2" height="2" fill="#6c6c6c"/><rect x="0" y="9" width="2" height="2" fill="#6c6c6c"/><rect x="3" y="9" width="2" height="2" fill="#6c6c6c"/><rect x="0" y="12" width="2" height="2" fill="#6c6c6c"/><rect x="3" y="12" width="2" height="2" fill="#6c6c6c"/><rect x="0" y="15" width="2" height="2" fill="#6c6c6c"/><rect x="3" y="15" width="2" height="2" fill="#6c6c6c"/></svg>
<svg style="left:1622px;top:125px;" width="26" height="24" viewBox="0 0 26 24"><g transform="translate(26 0) scale(-1 1)"><path d="M3.500 13a9 9 0 0 1 15.500-7" fill="none" stroke="#f2f2f2" stroke-width="3"/><path d="M22.500 1.500v9h-9z" fill="#f2f2f2"/><path d="M22.500 11a9 9 0 0 1-15.500 7" fill="none" stroke="#f2f2f2" stroke-width="3"/><path d="M3.500 22.500v-9h9z" fill="#f2f2f2"/><rect x="10.200" y="9.200" width="5.600" height="5.600" rx="1" transform="rotate(15 13 12)" fill="#f2f2f2"/></g></svg>
<svg style="left:1656px;top:124px;" width="26" height="26" viewBox="0 0 26 26"><rect x="5" y="1.500" width="11" height="7" fill="#f2f2f2"/><rect x="1" y="9" width="19" height="10" rx="1.500" fill="#f2f2f2"/><rect x="5.500" y="14.500" width="10.500" height="10.500" fill="#f2f2f2" stroke="#1f1f1f" stroke-width="1.200"/><path d="M7.500 17.500h6.500M7.500 19.800h6.500M7.500 22h6.500" stroke="#1f1f1f" stroke-width="1"/><path d="M24.500 2c0.500 5-1.500 9-4.500 13.500l-1.500-1.500c2-4 4-8 6-12z" fill="#f2f2f2"/><circle cx="21.500" cy="20.500" r="2.600" fill="none" stroke="#f2f2f2" stroke-width="1.500"/><path d="M17 13l4 5.500" stroke="#f2f2f2" stroke-width="1.500"/></svg>
<svg style="left:1694px;top:129px;" width="6" height="18" viewBox="0 0 6 18"><rect x="0" y="0" width="2" height="2" fill="#6c6c6c"/><rect x="3" y="0" width="2" height="2" fill="#6c6c6c"/><rect x="0" y="3" width="2" height="2" fill="#6c6c6c"/><rect x="3" y="3" width="2" height="2" fill="#6c6c6c"/><rect x="0" y="6" width="2" height="2" fill="#6c6c6c"/><rect x="3" y="6" width="2" height="2" fill="#6c6c6c"/><rect x="0" y="9" width="2" height="2" fill="#6c6c6c"/><rect x="3" y="9" width="2" height="2" fill="#6c6c6c"/><rect x="0" y="12" width="2" height="2" fill="#6c6c6c"/><rect x="3" y="12" width="2" height="2" fill="#6c6c6c"/><rect x="0" y="15" width="2" height="2" fill="#6c6c6c"/><rect x="3" y="15" width="2" height="2" fill="#6c6c6c"/></svg>
<svg style="left:1708px;top:125px;" width="24" height="24" viewBox="0 0 24 24"><rect x="1" y="1" width="3" height="21" fill="none" stroke="#424242" stroke-width="1.200"/><rect x="11.500" y="7.500" width="7.500" height="7.500" fill="none" stroke="#424242" stroke-width="1.300"/><path d="M5 11.300h6" stroke="#424242" stroke-width="1.200"/><path d="M20 9.500h2.500M20 11.300h2.500M20 13h2.500" stroke="#424242" stroke-width="0.800"/></svg>
<svg style="left:1739px;top:125px;" width="24" height="24" viewBox="0 0 24 24"><rect x="19.500" y="1" width="3" height="21" fill="none" stroke="#424242" stroke-width="1.200"/><rect x="5" y="7.500" width="7.500" height="7.500" fill="none" stroke="#424242" stroke-width="1.300"/><path d="M13 11.300h6" stroke="#424242" stroke-width="1.200"/><path d="M1 9.500h2.500M1 11.300h2.500M1 13h2.500" stroke="#424242" stroke-width="0.800"/></svg>
<svg style="left:1773px;top:125px;" width="24" height="24" viewBox="0 0 24 24"><rect x="1" y="1" width="21" height="3" fill="none" stroke="#424242" stroke-width="1.200"/><rect x="7.500" y="11.500" width="7.500" height="7.500" fill="none" stroke="#424242" stroke-width="1.300"/><path d="M11.300 5v6" stroke="#424242" stroke-width="1.200"/><path d="M9.500 20v2.500M11.300 20v2.500M13 20v2.500" stroke="#424242" stroke-width="0.800"/></svg>
<svg style="left:1806px;top:125px;" width="24" height="24" viewBox="0 0 24 24"><rect x="1" y="19.500" width="21" height="3" fill="none" stroke="#424242" stroke-width="1.200"/><rect x="7.500" y="5" width="7.500" height="7.500" fill="none" stroke="#424242" stroke-width="1.300"/><path d="M11.300 13v6" stroke="#424242" stroke-width="1.200"/><path d="M9.500 1v2.500M11.300 1v2.500M13 1v2.500" stroke="#424242" stroke-width="0.800"/></svg>
<svg style="left:1903px;top:130px;" width="12" height="12" viewBox="0 0 12 12"><path d="M1.500 1.500l3.500 4-3.500 4M6.500 1.500l3.500 4-3.500 4" fill="none" stroke="#3c3c3c" stroke-width="1.200"/></svg>
<svg style="left:35px;top:189px;" width="18" height="6" viewBox="0 0 18 6"><rect x="0" y="0" width="2" height="2" fill="#6c6c6c"/><rect x="3" y="0" width="2" height="2" fill="#6c6c6c"/><rect x="6" y="0" width="2" height="2" fill="#6c6c6c"/><rect x="9" y="0" width="2" height="2" fill="#6c6c6c"/><rect x="12" y="0" width="2" height="2" fill="#6c6c6c"/><rect x="15" y="0" width="2" height="2" fill="#6c6c6c"/><rect x="0" y="3" width="2" height="2" fill="#6c6c6c"/><rect x="3" y="3" width="2" height="2" fill="#6c6c6c"/><rect x="6" y="3" width="2" height="2" fill="#6c6c6c"/><rect x="9" y="3" width="2" height="2" fill="#6c6c6c"/><rect x="12" y="3" width="2" height="2" fill="#6c6c6c"/><rect x="15" y="3" width="2" height="2" fill="#6c6c6c"/></svg>
<div style="left:26px;top:199.5px;width:30px;height:28px;background:#3e3e3e;border:1px solid #565656;border-radius:3px;"></div>
<svg style="left:31px;top:200px;" width="20" height="26" viewBox="0 0 20 26"><path d="M3 2.500v17l4.500-4 3 7.500 3.500-1.500-3-7.300h6z" fill="#1f1f1f" stroke="#f2f2f2" stroke-width="1.800" stroke-linejoin="miter"/></svg>
<svg style="left:31px;top:231px;" width="20" height="27" viewBox="0 0 20 27"><path d="M12.500 3.500l2-2.500c1.500-1 4 0.500 3.500 2.500l-1.300 3z" fill="#f2f2f2"/><path d="M12 4.500l4.200 2.700-7.200 13.300-4.300-2.700z" fill="#f2f2f2"/><path d="M4.200 18.800l4.300 2.700-5.500 4.500c-1 0.300-1.200-0.300-1-1z" fill="none" stroke="#f2f2f2" stroke-width="1.200"/></svg>
<svg style="left:28px;top:264px;" width="26" height="26" viewBox="0 0 26 26"><path d="M25 13v12h-12z" fill="#2bc4c8"/><path d="M24.500 14V2.500H2.500v21.500H14" fill="none" stroke="#f2f2f2" stroke-width="3"/></svg>
<svg style="left:28px;top:296px;" width="26" height="26" viewBox="0 0 26 26"><path d="M3 7l8-5 9.500 3.500 4 9.500-7.500 8.500H3z" fill="none" stroke="#f2f2f2" stroke-width="2"/><g fill="#f2f2f2"><circle cx="3" cy="7" r="1.800"/><circle cx="11" cy="2" r="1.800"/><circle cx="20.500" cy="5.500" r="1.800"/><circle cx="24.300" cy="15" r="1.800"/><circle cx="17" cy="23.500" r="1.800"/><circle cx="3" cy="23.500" r="1.800"/></g></svg>
<svg style="left:28px;top:328px;" width="26" height="26" viewBox="0 0 26 26"><path d="M16.500 1c1 5-0.500 11-3.500 15l-2-1.200c1.500-5 3-9.500 5.500-13.800z" fill="#f2f2f2"/><path d="M25 11c-3.500 3-8 4-12 4l0.300-2c4-1 8-1.500 11.700-2z" fill="#f2f2f2"/><ellipse cx="5.500" cy="13.300" rx="3.300" ry="2.300" fill="none" stroke="#f2f2f2" stroke-width="1.700" transform="rotate(15 5.500 13.300)"/><ellipse cx="11.300" cy="20.500" rx="2.300" ry="3.500" fill="none" stroke="#f2f2f2" stroke-width="1.700"/></svg>
<svg style="left:29px;top:361px;" width="24" height="24" viewBox="0 0 24 24"><path d="M1 2h22" stroke="#cacaca" stroke-width="1.600"/><path d="M2 6v16h7.500M14.500 22h7.500V6" fill="none" stroke="#cacaca" stroke-width="1.900"/></svg>
<span class="t" style="left:-159px;width:400px;text-align:center;top:395.50px;height:20px;line-height:20px;font-size:23.5px;color:#f2f2f2;letter-spacing:-0.25px;font-weight:bold;letter-spacing:0;">A</span>
<svg style="left:31px;top:424px;" width="20" height="26" viewBox="0 0 20 26"><path d="M10 0.800c5 0 9 3.800 9 8.700 0 5-5 10-9 15.500-4-5.500-9-10.500-9-15.500 0-4.900 4-8.700 9-8.700z" fill="#f2f2f2"/><circle cx="10" cy="9.300" r="3.200" fill="#1f1f1f"/></svg>
<svg style="left:28px;top:456px;" width="26" height="26" viewBox="0 0 26 26"><g transform="rotate(-33 13 13)"><rect x="0" y="9.500" width="26" height="7" fill="none" stroke="#f2f2f2" stroke-width="1.700"/><path d="M4.500 10v3M8.500 10v3M12.500 10v3M16.500 10v3M20.500 10v3" stroke="#f2f2f2" stroke-width="1.300"/></g></svg>
<svg style="left:35px;top:495px;" width="18" height="6" viewBox="0 0 18 6"><rect x="0" y="0" width="2" height="2" fill="#6c6c6c"/><rect x="3" y="0" width="2" height="2" fill="#6c6c6c"/><rect x="6" y="0" width="2" height="2" fill="#6c6c6c"/><rect x="9" y="0" width="2" height="2" fill="#6c6c6c"/><rect x="12" y="0" width="2" height="2" fill="#6c6c6c"/><rect x="15" y="0" width="2" height="2" fill="#6c6c6c"/><rect x="0" y="3" width="2" height="2" fill="#6c6c6c"/><rect x="3" y="3" width="2" height="2" fill="#6c6c6c"/><rect x="6" y="3" width="2" height="2" fill="#6c6c6c"/><rect x="9" y="3" width="2" height="2" fill="#6c6c6c"/><rect x="12" y="3" width="2" height="2" fill="#6c6c6c"/><rect x="15" y="3" width="2" height="2" fill="#6c6c6c"/></svg>
<svg style="left:29px;top:506px;" width="24" height="26" viewBox="0 0 24 26"><ellipse cx="12" cy="13" rx="8.500" ry="10" fill="none" stroke="#5e5e5e" stroke-width="3.500"/><ellipse cx="12" cy="13" rx="10.800" ry="12.300" fill="none" stroke="#5e5e5e" stroke-width="0.800"/><ellipse cx="12" cy="13" rx="5.300" ry="7" fill="none" stroke="#5e5e5e" stroke-width="0.800"/></svg>
<div style="left:10px;top:539.5px;width:63px;height:1px;background:#2a2a2a;"></div>
<svg style="left:29px;top:546px;" width="25" height="26" viewBox="0 0 25 26"><rect x="6.500" y="1.500" width="16.500" height="16.500" fill="none" stroke="#5e5e5e" stroke-width="1.700"/><rect x="1.500" y="6.500" width="16.500" height="16.500" fill="none" stroke="#5e5e5e" stroke-width="1.700" /><rect x="8" y="8" width="8.500" height="8.500" fill="none" stroke="#5e5e5e" stroke-width="0.800" stroke-dasharray="1.500 1.500"/></svg>
<svg style="left:29px;top:578px;" width="25" height="26" viewBox="0 0 25 26"><path d="M23.500 13v11h-11z" fill="#7fb2b2"/><rect x="1.500" y="1.500" width="16" height="16" fill="none" stroke="#f2f2f2" stroke-width="2.200"/><rect x="7.500" y="7.500" width="15.500" height="15.500" fill="none" stroke="#f2f2f2" stroke-width="2.200"/></svg>
<div style="left:10px;top:611.5px;width:63px;height:1px;background:#2a2a2a;"></div>
<svg style="left:28.5px;top:619px;" width="26" height="26" viewBox="0 0 26 26"><rect x="0.0" y="0.0" width="6" height="6" fill="#5e5e5e"/><rect x="9.2" y="0.0" width="6" height="6" fill="#5e5e5e"/><rect x="18.4" y="0.0" width="6" height="6" fill="#5e5e5e"/><rect x="0.0" y="9.2" width="6" height="6" fill="#5e5e5e"/><rect x="9.2" y="9.2" width="6" height="6" fill="#5e5e5e"/><rect x="18.4" y="9.2" width="6" height="6" fill="#5e5e5e"/><rect x="0.0" y="18.4" width="6" height="6" fill="#5e5e5e"/><rect x="9.2" y="18.4" width="6" height="6" fill="#5e5e5e"/><rect x="18.4" y="18.4" width="6" height="6" fill="#5e5e5e"/></svg>
<svg style="left:28.5px;top:650.5px;" width="25" height="25" viewBox="0 0 25 25"><circle cx="12.500" cy="12.500" r="7.300" fill="none" stroke="#5e5e5e" stroke-width="1.600"/><rect x="10.30" y="0.30" width="4.400" height="4.400" fill="#5e5e5e" stroke="#5e5e5e" stroke-width="0.900" transform="rotate(0 12.50 2.50)"/><rect x="17.37" y="3.23" width="4.400" height="4.400" fill="#1f1f1f" stroke="#5e5e5e" stroke-width="0.900" transform="rotate(45 19.57 5.43)"/><rect x="20.30" y="10.30" width="4.400" height="4.400" fill="#1f1f1f" stroke="#5e5e5e" stroke-width="0.900" transform="rotate(90 22.50 12.50)"/><rect x="17.37" y="17.37" width="4.400" height="4.400" fill="#1f1f1f" stroke="#5e5e5e" stroke-width="0.900" transform="rotate(135 19.57 19.57)"/><rect x="10.30" y="20.30" width="4.400" height="4.400" fill="#1f1f1f" stroke="#5e5e5e" stroke-width="0.900" transform="rotate(180 12.50 22.50)"/><rect x="3.23" y="17.37" width="4.400" height="4.400" fill="#1f1f1f" stroke="#5e5e5e" stroke-width="0.900" transform="rotate(225 5.43 19.57)"/><rect x="0.30" y="10.30" width="4.400" height="4.400" fill="#1f1f1f" stroke="#5e5e5e" stroke-width="0.900" transform="rotate(270 2.50 12.50)"/><rect x="3.23" y="3.23" width="4.400" height="4.400" fill="#1f1f1f" stroke="#5e5e5e" stroke-width="0.900" transform="rotate(315 5.43 5.43)"/></svg>
<div style="left:10px;top:684px;width:63px;height:1px;background:#2a2a2a;"></div>
<svg style="left:28px;top:690px;" width="26" height="26" viewBox="0 0 26 26"><path d="M3 6.500l8-4 9 3 4 8.500-6.500 9H3z" fill="none" stroke="#8a8a8a" stroke-width="1.800"/><g fill="#8a8a8a"><circle cx="3" cy="6.500" r="1.500"/><circle cx="20" cy="5.500" r="1.500"/><circle cx="24" cy="14" r="1.500"/><circle cx="17.500" cy="23" r="1.500"/><circle cx="3" cy="23" r="1.500"/></g><path d="M9 3.500c2-1.500 4-1.500 6 0" fill="none" stroke="#f2f2f2" stroke-width="1.500"/><path d="M13.500 0.500l3.500 3.300-4.500 1.200z" fill="#f2f2f2"/></svg>
<svg style="left:29px;top:723px;" width="24" height="24" viewBox="0 0 24 24"><path d="M2 23V13C2 6 7 2 14 2h8" fill="none" stroke="#f2f2f2" stroke-width="2"/><path d="M2 23h20.500V2" fill="none" stroke="#a0a0a0" stroke-width="1.300" stroke-dasharray="1.500 1.500"/></svg>
<span class="t" style="left:18.3px;top:752.50px;height:20px;line-height:20px;font-size:14.5px;color:#ffffff;letter-spacing:-0.280px;">Radius:</span>
<div class="inp" style="left:4.5px;top:775px;width:73.5px;height:24px;"></div>
<div style="left:62px;top:775px;width:16px;height:24px;background:#4e4e4e;border:1px solid #5b5b5b;border-radius:0 3px 3px 0;"></div>
<svg style="left:62px;top:775px;" width="16" height="24" viewBox="0 0 16 24"><path d="M3.300 9.3l4.700-5 4.700 5z" fill="#828282"/><path d="M3.300 14.7l4.700 5 4.700-5z" fill="#747474"/></svg>
<span class="t" style="left:23.7px;top:777.50px;height:20px;line-height:20px;font-size:14.5px;color:#b4b4b4;letter-spacing:-0.552px;">5.0</span>
<div style="left:82px;top:183.3px;width:4px;height:768px;background:#1a1a1a;"></div>
<div style="left:82px;top:183.3px;width:1208px;height:3px;background:#1a1a1a;"></div>
<div style="left:86px;top:186px;width:1199px;height:762px;background:#f9f9f9;overflow:hidden;"></div>
<span class="t" style="left:1009.9000000000001px;width:400px;text-align:center;top:189.60px;height:20px;line-height:20px;font-size:15px;color:#858585;letter-spacing:-0.25px;letter-spacing:-0.4px;">20</span>
<span class="t" style="left:1009.9000000000001px;width:400px;text-align:center;top:925.00px;height:20px;line-height:20px;font-size:15px;color:#858585;letter-spacing:-0.25px;letter-spacing:-0.4px;">20</span>
<span class="t" style="left:959.9000000000001px;width:400px;text-align:center;top:189.60px;height:20px;line-height:20px;font-size:15px;color:#858585;letter-spacing:-0.25px;letter-spacing:-0.4px;">40</span>
<span class="t" style="left:959.9000000000001px;width:400px;text-align:center;top:925.00px;height:20px;line-height:20px;font-size:15px;color:#858585;letter-spacing:-0.25px;letter-spacing:-0.4px;">40</span>
<span class="t" style="left:909.9000000000001px;width:400px;text-align:center;top:189.60px;height:20px;line-height:20px;font-size:15px;color:#858585;letter-spacing:-0.25px;letter-spacing:-0.4px;">60</span>
<span class="t" style="left:909.9000000000001px;width:400px;text-align:center;top:925.00px;height:20px;line-height:20px;font-size:15px;color:#858585;letter-spacing:-0.25px;letter-spacing:-0.4px;">60</span>
<span class="t" style="left:859.9000000000001px;width:400px;text-align:center;top:189.60px;height:20px;line-height:20px;font-size:15px;color:#858585;letter-spacing:-0.25px;letter-spacing:-0.4px;">80</span>
<span class="t" style="left:859.9000000000001px;width:400px;text-align:center;top:925.00px;height:20px;line-height:20px;font-size:15px;color:#858585;letter-spacing:-0.25px;letter-spacing:-0.4px;">80</span>
<span class="t" style="left:809.9px;width:400px;text-align:center;top:189.60px;height:20px;line-height:20px;font-size:15px;color:#858585;letter-spacing:-0.25px;letter-spacing:-0.4px;">100</span>
<span class="t" style="left:809.9px;width:400px;text-align:center;top:925.00px;height:20px;line-height:20px;font-size:15px;color:#858585;letter-spacing:-0.25px;letter-spacing:-0.4px;">100</span>
<span class="t" style="left:759.9px;width:400px;text-align:center;top:189.60px;height:20px;line-height:20px;font-size:15px;color:#858585;letter-spacing:-0.25px;letter-spacing:-0.4px;">120</span>
<span class="t" style="left:759.9px;width:400px;text-align:center;top:925.00px;height:20px;line-height:20px;font-size:15px;color:#858585;letter-spacing:-0.25px;letter-spacing:-0.4px;">120</span>
<span class="t" style="left:709.9px;width:400px;text-align:center;top:189.60px;height:20px;line-height:20px;font-size:15px;color:#858585;letter-spacing:-0.25px;letter-spacing:-0.4px;">140</span>
<span class="t" style="left:709.9px;width:400px;text-align:center;top:925.00px;height:20px;line-height:20px;font-size:15px;color:#858585;letter-spacing:-0.25px;letter-spacing:-0.4px;">140</span>
<span class="t" style="left:659.9px;width:400px;text-align:center;top:189.60px;height:20px;line-height:20px;font-size:15px;color:#858585;letter-spacing:-0.25px;letter-spacing:-0.4px;">160</span>
<span class="t" style="left:659.9px;width:400px;text-align:center;top:925.00px;height:20px;line-height:20px;font-size:15px;color:#858585;letter-spacing:-0.25px;letter-spacing:-0.4px;">160</span>
<span class="t" style="left:609.9px;width:400px;text-align:center;top:189.60px;height:20px;line-height:20px;font-size:15px;color:#858585;letter-spacing:-0.25px;letter-spacing:-0.4px;">180</span>
<span class="t" style="left:609.9px;width:400px;text-align:center;top:925.00px;height:20px;line-height:20px;font-size:15px;color:#858585;letter-spacing:-0.25px;letter-spacing:-0.4px;">180</span>
<span class="t" style="left:559.9px;width:400px;text-align:center;top:189.60px;height:20px;line-height:20px;font-size:15px;color:#858585;letter-spacing:-0.25px;letter-spacing:-0.4px;">200</span>
<span class="t" style="left:559.9px;width:400px;text-align:center;top:925.00px;height:20px;line-height:20px;font-size:15px;color:#858585;letter-spacing:-0.25px;letter-spacing:-0.4px;">200</span>
<span class="t" style="left:509.9px;width:400px;text-align:center;top:189.60px;height:20px;line-height:20px;font-size:15px;color:#858585;letter-spacing:-0.25px;letter-spacing:-0.4px;">220</span>
<span class="t" style="left:509.9px;width:400px;text-align:center;top:925.00px;height:20px;line-height:20px;font-size:15px;color:#858585;letter-spacing:-0.25px;letter-spacing:-0.4px;">220</span>
<span class="t" style="left:459.9px;width:400px;text-align:center;top:189.60px;height:20px;line-height:20px;font-size:15px;color:#858585;letter-spacing:-0.25px;letter-spacing:-0.4px;">240</span>
<span class="t" style="left:459.9px;width:400px;text-align:center;top:925.00px;height:20px;line-height:20px;font-size:15px;color:#858585;letter-spacing:-0.25px;letter-spacing:-0.4px;">240</span>
<span class="t" style="left:409.9px;width:400px;text-align:center;top:189.60px;height:20px;line-height:20px;font-size:15px;color:#858585;letter-spacing:-0.25px;letter-spacing:-0.4px;">260</span>
<span class="t" style="left:409.9px;width:400px;text-align:center;top:925.00px;height:20px;line-height:20px;font-size:15px;color:#858585;letter-spacing:-0.25px;letter-spacing:-0.4px;">260</span>
<span class="t" style="left:359.9px;width:400px;text-align:center;top:189.60px;height:20px;line-height:20px;font-size:15px;color:#858585;letter-spacing:-0.25px;letter-spacing:-0.4px;">280</span>
<span class="t" style="left:359.9px;width:400px;text-align:center;top:925.00px;height:20px;line-height:20px;font-size:15px;color:#858585;letter-spacing:-0.25px;letter-spacing:-0.4px;">280</span>
<span class="t" style="left:309.9px;width:400px;text-align:center;top:189.60px;height:20px;line-height:20px;font-size:15px;color:#858585;letter-spacing:-0.25px;letter-spacing:-0.4px;">300</span>
<span class="t" style="left:309.9px;width:400px;text-align:center;top:925.00px;height:20px;line-height:20px;font-size:15px;color:#858585;letter-spacing:-0.25px;letter-spacing:-0.4px;">300</span>
<span class="t" style="left:259.9px;width:400px;text-align:center;top:189.60px;height:20px;line-height:20px;font-size:15px;color:#858585;letter-spacing:-0.25px;letter-spacing:-0.4px;">320</span>
<span class="t" style="left:259.9px;width:400px;text-align:center;top:925.00px;height:20px;line-height:20px;font-size:15px;color:#858585;letter-spacing:-0.25px;letter-spacing:-0.4px;">320</span>
<span class="t" style="left:209.89999999999998px;width:400px;text-align:center;top:189.60px;height:20px;line-height:20px;font-size:15px;color:#858585;letter-spacing:-0.25px;letter-spacing:-0.4px;">340</span>
<span class="t" style="left:209.89999999999998px;width:400px;text-align:center;top:925.00px;height:20px;line-height:20px;font-size:15px;color:#858585;letter-spacing:-0.25px;letter-spacing:-0.4px;">340</span>
<span class="t" style="left:159.89999999999998px;width:400px;text-align:center;top:189.60px;height:20px;line-height:20px;font-size:15px;color:#858585;letter-spacing:-0.25px;letter-spacing:-0.4px;">360</span>
<span class="t" style="left:159.89999999999998px;width:400px;text-align:center;top:925.00px;height:20px;line-height:20px;font-size:15px;color:#858585;letter-spacing:-0.25px;letter-spacing:-0.4px;">360</span>
<span class="t" style="left:109.89999999999998px;width:400px;text-align:center;top:189.60px;height:20px;line-height:20px;font-size:15px;color:#858585;letter-spacing:-0.25px;letter-spacing:-0.4px;">380</span>
<span class="t" style="left:109.89999999999998px;width:400px;text-align:center;top:925.00px;height:20px;line-height:20px;font-size:15px;color:#858585;letter-spacing:-0.25px;letter-spacing:-0.4px;">380</span>
<span class="t" style="left:59.89999999999998px;width:400px;text-align:center;top:189.60px;height:20px;line-height:20px;font-size:15px;color:#858585;letter-spacing:-0.25px;letter-spacing:-0.4px;">400</span>
<span class="t" style="left:59.89999999999998px;width:400px;text-align:center;top:925.00px;height:20px;line-height:20px;font-size:15px;color:#858585;letter-spacing:-0.25px;letter-spacing:-0.4px;">400</span>
<span class="t" style="left:9.900000000000006px;width:400px;text-align:center;top:189.60px;height:20px;line-height:20px;font-size:15px;color:#858585;letter-spacing:-0.25px;letter-spacing:-0.4px;">420</span>
<span class="t" style="left:9.900000000000006px;width:400px;text-align:center;top:925.00px;height:20px;line-height:20px;font-size:15px;color:#858585;letter-spacing:-0.25px;letter-spacing:-0.4px;">420</span>
<span class="t" style="left:-40.099999999999994px;width:400px;text-align:center;top:189.60px;height:20px;line-height:20px;font-size:15px;color:#858585;letter-spacing:-0.25px;letter-spacing:-0.4px;">440</span>
<span class="t" style="left:-40.099999999999994px;width:400px;text-align:center;top:925.00px;height:20px;line-height:20px;font-size:15px;color:#858585;letter-spacing:-0.25px;letter-spacing:-0.4px;">440</span>
<span class="t" style="left:-90.1px;width:400px;text-align:center;top:189.60px;height:20px;line-height:20px;font-size:15px;color:#858585;letter-spacing:-0.25px;letter-spacing:-0.4px;">460</span>
<span class="t" style="left:-90.1px;width:400px;text-align:center;top:925.00px;height:20px;line-height:20px;font-size:15px;color:#858585;letter-spacing:-0.25px;letter-spacing:-0.4px;">460</span>
<span class="t" style="left:1060.5px;width:400px;text-align:center;top:925.00px;height:20px;line-height:20px;font-size:15px;color:#858585;letter-spacing:-0.25px;letter-spacing:0;">0</span>
<span class="t" style="left:90.5px;top:194.70px;height:20px;line-height:20px;font-size:15px;color:#858585;letter-spacing:-0.25px;letter-spacing:-0.4px;">0</span>
<span class="t" style="left:90.5px;top:244.70px;height:20px;line-height:20px;font-size:15px;color:#858585;letter-spacing:-0.25px;letter-spacing:-0.4px;">20</span>
<span class="t" style="left:90.5px;top:294.70px;height:20px;line-height:20px;font-size:15px;color:#858585;letter-spacing:-0.25px;letter-spacing:-0.4px;">40</span>
<span class="t" style="left:90.5px;top:344.70px;height:20px;line-height:20px;font-size:15px;color:#858585;letter-spacing:-0.25px;letter-spacing:-0.4px;">60</span>
<span class="t" style="left:90.5px;top:394.70px;height:20px;line-height:20px;font-size:15px;color:#858585;letter-spacing:-0.25px;letter-spacing:-0.4px;">80</span>
<span class="t" style="left:90.5px;top:444.70px;height:20px;line-height:20px;font-size:15px;color:#858585;letter-spacing:-0.25px;letter-spacing:-0.4px;">100</span>
<span class="t" style="left:90.5px;top:494.70px;height:20px;line-height:20px;font-size:15px;color:#858585;letter-spacing:-0.25px;letter-spacing:-0.4px;">120</span>
<span class="t" style="left:90.5px;top:544.70px;height:20px;line-height:20px;font-size:15px;color:#858585;letter-spacing:-0.25px;letter-spacing:-0.4px;">140</span>
<span class="t" style="left:90.5px;top:594.70px;height:20px;line-height:20px;font-size:15px;color:#858585;letter-spacing:-0.25px;letter-spacing:-0.4px;">160</span>
<span class="t" style="left:90.5px;top:644.70px;height:20px;line-height:20px;font-size:15px;color:#858585;letter-spacing:-0.25px;letter-spacing:-0.4px;">180</span>
<span class="t" style="left:90.5px;top:694.70px;height:20px;line-height:20px;font-size:15px;color:#858585;letter-spacing:-0.25px;letter-spacing:-0.4px;">200</span>
<span class="t" style="left:90.5px;top:744.70px;height:20px;line-height:20px;font-size:15px;color:#858585;letter-spacing:-0.25px;letter-spacing:-0.4px;">220</span>
<span class="t" style="left:90.5px;top:794.70px;height:20px;line-height:20px;font-size:15px;color:#858585;letter-spacing:-0.25px;letter-spacing:-0.4px;">240</span>
<span class="t" style="left:90.5px;top:844.70px;height:20px;line-height:20px;font-size:15px;color:#858585;letter-spacing:-0.25px;letter-spacing:-0.4px;">260</span>
<span class="t" style="left:90.5px;top:894.70px;height:20px;line-height:20px;font-size:15px;color:#858585;letter-spacing:-0.25px;letter-spacing:-0.4px;">280</span>
<div style="left:1264.300px;top:186px;width:20.700px;height:762px;overflow:hidden;">
<span class="t" style="left:-383.5px;width:400px;text-align:right;top:8.70px;height:20px;line-height:20px;font-size:15px;color:#858585;letter-spacing:-0.25px;letter-spacing:-0.4px;">0</span>
<span class="t" style="left:-383.5px;width:400px;text-align:right;top:58.70px;height:20px;line-height:20px;font-size:15px;color:#858585;letter-spacing:-0.25px;letter-spacing:-0.4px;">20</span>
<span class="t" style="left:-383.5px;width:400px;text-align:right;top:108.70px;height:20px;line-height:20px;font-size:15px;color:#858585;letter-spacing:-0.25px;letter-spacing:-0.4px;">40</span>
<span class="t" style="left:-383.5px;width:400px;text-align:right;top:158.70px;height:20px;line-height:20px;font-size:15px;color:#858585;letter-spacing:-0.25px;letter-spacing:-0.4px;">60</span>
<span class="t" style="left:-383.5px;width:400px;text-align:right;top:208.70px;height:20px;line-height:20px;font-size:15px;color:#858585;letter-spacing:-0.25px;letter-spacing:-0.4px;">80</span>
<span class="t" style="left:-383.5px;width:400px;text-align:right;top:258.70px;height:20px;line-height:20px;font-size:15px;color:#858585;letter-spacing:-0.25px;letter-spacing:-0.4px;">100</span>
<span class="t" style="left:-383.5px;width:400px;text-align:right;top:308.70px;height:20px;line-height:20px;font-size:15px;color:#858585;letter-spacing:-0.25px;letter-spacing:-0.4px;">120</span>
<span class="t" style="left:-383.5px;width:400px;text-align:right;top:358.70px;height:20px;line-height:20px;font-size:15px;color:#858585;letter-spacing:-0.25px;letter-spacing:-0.4px;">140</span>
<span class="t" style="left:-383.5px;width:400px;text-align:right;top:408.70px;height:20px;line-height:20px;font-size:15px;color:#858585;letter-spacing:-0.25px;letter-spacing:-0.4px;">160</span>
<span class="t" style="left:-383.5px;width:400px;text-align:right;top:458.70px;height:20px;line-height:20px;font-size:15px;color:#858585;letter-spacing:-0.25px;letter-spacing:-0.4px;">180</span>
<span class="t" style="left:-383.5px;width:400px;text-align:right;top:508.70px;height:20px;line-height:20px;font-size:15px;color:#858585;letter-spacing:-0.25px;letter-spacing:-0.4px;">200</span>
<span class="t" style="left:-383.5px;width:400px;text-align:right;top:558.70px;height:20px;line-height:20px;font-size:15px;color:#858585;letter-spacing:-0.25px;letter-spacing:-0.4px;">220</span>
<span class="t" style="left:-383.5px;width:400px;text-align:right;top:608.70px;height:20px;line-height:20px;font-size:15px;color:#858585;letter-spacing:-0.25px;letter-spacing:-0.4px;">240</span>
<span class="t" style="left:-383.5px;width:400px;text-align:right;top:658.70px;height:20px;line-height:20px;font-size:15px;color:#858585;letter-spacing:-0.25px;letter-spacing:-0.4px;">260</span>
<span class="t" style="left:-383.5px;width:400px;text-align:right;top:708.70px;height:20px;line-height:20px;font-size:15px;color:#858585;letter-spacing:-0.25px;letter-spacing:-0.4px;">280</span>
</div>
<span class="t" style="left:1230.5px;top:187.30px;height:20px;line-height:20px;font-size:15.3px;color:#4a3c3c;letter-spacing:-0.25px;letter-spacing:0;">X</span>
<span class="t" style="left:1264px;top:220.30px;height:20px;line-height:20px;font-size:15.3px;color:#4a3c3c;letter-spacing:-0.25px;letter-spacing:0;">Y</span>
<svg style="left:109px;top:204px;" width="1153" height="726" viewBox="0 0 1153 726"><defs>
<filter id="nz" x="0" y="0" width="100%" height="100%" color-interpolation-filters="sRGB">
<feTurbulence type="fractalNoise" baseFrequency="0.75" numOctaves="2" seed="7" result="n"/>
<feColorMatrix in="n" type="matrix" values="0 0 0 0 0  0 0 0 0 0  0 0 0 0 0  3.500 3.500 0 0 -4.100"/>
<feComposite in="SourceGraphic" operator="in"/>
</filter>
<linearGradient id="vl1" x1="0" y1="0" x2="0" y2="1"><stop offset="0" stop-color="#6e6e6e"/><stop offset="0.6" stop-color="#8a8a8a"/><stop offset="1" stop-color="#8a8a8a" stop-opacity="0"/></linearGradient><linearGradient id="vl2" x1="0" y1="0" x2="0" y2="1"><stop offset="0" stop-color="#8a8a8a" stop-opacity="0"/><stop offset="0.4" stop-color="#8a8a8a"/><stop offset="1" stop-color="#7a7a7a"/></linearGradient>
<clipPath id="cp"><polygon points="95.75,0 141.75,0 164.5,115 267.25,616 289.3,726 0,726 0,464 1,460 22,356 73.25,115"/><polygon points="726,0 1153,0 1153,79"/></clipPath>
</defs>
<rect width="1153" height="726" fill="#808080"/>
<g stroke="#777777" stroke-width="1" fill="none" shape-rendering="crispEdges"><path d="M1151.50 0V726"/><path d="M1126.50 0V726"/><path d="M1101.50 0V726"/><path d="M1076.50 0V726"/><path d="M1051.50 0V726"/><path d="M1026.50 0V726"/><path d="M1001.50 0V726"/><path d="M976.50 0V726"/><path d="M951.50 0V726"/><path d="M926.50 0V726"/><path d="M901.50 0V726"/><path d="M876.50 0V726"/><path d="M851.50 0V726"/><path d="M826.50 0V726"/><path d="M801.50 0V726"/><path d="M776.50 0V726"/><path d="M751.50 0V726"/><path d="M726.50 0V726"/><path d="M701.50 0V726"/><path d="M676.50 0V726"/><path d="M651.50 0V726"/><path d="M626.50 0V726"/><path d="M601.50 0V726"/><path d="M576.50 0V726"/><path d="M551.50 0V726"/><path d="M526.50 0V726"/><path d="M501.50 0V726"/><path d="M476.50 0V726"/><path d="M451.50 0V726"/><path d="M426.50 0V726"/><path d="M401.50 0V726"/><path d="M376.50 0V726"/><path d="M351.50 0V726"/><path d="M326.50 0V726"/><path d="M301.50 0V726"/><path d="M276.50 0V726"/><path d="M251.50 0V726"/><path d="M226.50 0V726"/><path d="M201.50 0V726"/><path d="M176.50 0V726"/><path d="M151.50 0V726"/><path d="M126.50 0V726"/><path d="M101.50 0V726"/><path d="M76.50 0V726"/><path d="M51.50 0V726"/><path d="M26.50 0V726"/><path d="M1.50 0V726"/><path d="M0 0.50H1153"/><path d="M0 25.50H1153"/><path d="M0 50.50H1153"/><path d="M0 75.50H1153"/><path d="M0 100.50H1153"/><path d="M0 125.50H1153"/><path d="M0 150.50H1153"/><path d="M0 175.50H1153"/><path d="M0 200.50H1153"/><path d="M0 225.50H1153"/><path d="M0 250.50H1153"/><path d="M0 275.50H1153"/><path d="M0 300.50H1153"/><path d="M0 325.50H1153"/><path d="M0 350.50H1153"/><path d="M0 375.50H1153"/><path d="M0 400.50H1153"/><path d="M0 425.50H1153"/><path d="M0 450.50H1153"/><path d="M0 475.50H1153"/><path d="M0 500.50H1153"/><path d="M0 525.50H1153"/><path d="M0 550.50H1153"/><path d="M0 575.50H1153"/><path d="M0 600.50H1153"/><path d="M0 625.50H1153"/><path d="M0 650.50H1153"/><path d="M0 675.50H1153"/><path d="M0 700.50H1153"/><path d="M0 725.50H1153"/></g>
<g clip-path="url(#cp)">
<rect width="1153" height="726" fill="#fafafa"/>
<g stroke="#eeeeee" stroke-width="1" fill="none" shape-rendering="crispEdges"><path d="M1151.50 0V726"/><path d="M1126.50 0V726"/><path d="M1101.50 0V726"/><path d="M1076.50 0V726"/><path d="M1051.50 0V726"/><path d="M1026.50 0V726"/><path d="M1001.50 0V726"/><path d="M976.50 0V726"/><path d="M951.50 0V726"/><path d="M926.50 0V726"/><path d="M901.50 0V726"/><path d="M876.50 0V726"/><path d="M851.50 0V726"/><path d="M826.50 0V726"/><path d="M801.50 0V726"/><path d="M776.50 0V726"/><path d="M751.50 0V726"/><path d="M726.50 0V726"/><path d="M701.50 0V726"/><path d="M676.50 0V726"/><path d="M651.50 0V726"/><path d="M626.50 0V726"/><path d="M601.50 0V726"/><path d="M576.50 0V726"/><path d="M551.50 0V726"/><path d="M526.50 0V726"/><path d="M501.50 0V726"/><path d="M476.50 0V726"/><path d="M451.50 0V726"/><path d="M426.50 0V726"/><path d="M401.50 0V726"/><path d="M376.50 0V726"/><path d="M351.50 0V726"/><path d="M326.50 0V726"/><path d="M301.50 0V726"/><path d="M276.50 0V726"/><path d="M251.50 0V726"/><path d="M226.50 0V726"/><path d="M201.50 0V726"/><path d="M176.50 0V726"/><path d="M151.50 0V726"/><path d="M126.50 0V726"/><path d="M101.50 0V726"/><path d="M76.50 0V726"/><path d="M51.50 0V726"/><path d="M26.50 0V726"/><path d="M1.50 0V726"/><path d="M0 0.50H1153"/><path d="M0 25.50H1153"/><path d="M0 50.50H1153"/><path d="M0 75.50H1153"/><path d="M0 100.50H1153"/><path d="M0 125.50H1153"/><path d="M0 150.50H1153"/><path d="M0 175.50H1153"/><path d="M0 200.50H1153"/><path d="M0 225.50H1153"/><path d="M0 250.50H1153"/><path d="M0 275.50H1153"/><path d="M0 300.50H1153"/><path d="M0 325.50H1153"/><path d="M0 350.50H1153"/><path d="M0 375.50H1153"/><path d="M0 400.50H1153"/><path d="M0 425.50H1153"/><path d="M0 450.50H1153"/><path d="M0 475.50H1153"/><path d="M0 500.50H1153"/><path d="M0 525.50H1153"/><path d="M0 550.50H1153"/><path d="M0 575.50H1153"/><path d="M0 600.50H1153"/><path d="M0 625.50H1153"/><path d="M0 650.50H1153"/><path d="M0 675.50H1153"/><path d="M0 700.50H1153"/><path d="M0 725.50H1153"/></g>
<rect width="1153" height="726" fill="#6a6a6a" filter="url(#nz)"/>
<rect x="118" y="0" width="1" height="130" fill="url(#vl1)"/><rect x="116.5" y="596" width="1" height="129" fill="url(#vl2)"/><path d="M114.4 199H121.6" stroke="#7a7a7a" stroke-width="1"/><path d="M118 197.0V201.0" stroke="#8a8a8a" stroke-width="1"/><path d="M116.8 199L118 198.0L119.2 199L118 200.0z" fill="#6e6e6e"/><path d="M112.6 276.5H123.4" stroke="#7a7a7a" stroke-width="1"/><path d="M118 273.5V279.5" stroke="#8a8a8a" stroke-width="1"/><path d="M116.2 276.5L118 275.0L119.8 276.5L118 278.0z" fill="#6e6e6e"/><path d="M114.8 332.5H121.2" stroke="#7a7a7a" stroke-width="1"/><path d="M118 330.8V334.2" stroke="#8a8a8a" stroke-width="1"/><path d="M117.0 332.5L118 331.6L119.0 332.5L118 333.4z" fill="#6e6e6e"/><path d="M109.7 407H125.9" stroke="#7a7a7a" stroke-width="1"/><path d="M117.80000000000001 402.5V411.5" stroke="#8a8a8a" stroke-width="1"/><path d="M115.1 407L117.80000000000001 404.8L120.5 407L117.80000000000001 409.2z" fill="#6e6e6e"/><path d="M114.5 472.5H122.5" stroke="#7a7a7a" stroke-width="1"/><path d="M118.5 470.2V474.8" stroke="#8a8a8a" stroke-width="1"/><path d="M117.2 472.5L118.5 471.4L119.8 472.5L118.5 473.6z" fill="#6e6e6e"/><path d="M112.3 512H121.3" stroke="#7a7a7a" stroke-width="1"/><path d="M116.80000000000001 509.5V514.5" stroke="#8a8a8a" stroke-width="1"/><path d="M115.3 512L116.80000000000001 510.8L118.3 512L116.80000000000001 513.2z" fill="#6e6e6e"/><path d="M115.3 556.5H123.4" stroke="#7a7a7a" stroke-width="1"/><path d="M119.30000000000001 554.2V558.8" stroke="#8a8a8a" stroke-width="1"/><path d="M118.0 556.5L119.30000000000001 555.4L120.7 556.5L119.30000000000001 557.6z" fill="#6e6e6e"/><path d="M104.9 669.3H128.3" stroke="#7a7a7a" stroke-width="1"/><path d="M116.6 662.8V675.8" stroke="#8a8a8a" stroke-width="1"/><path d="M112.7 669.3L116.6 666.0L120.5 669.3L116.6 672.5z" fill="#6e6e6e"/><path d="M231.9 638.3H248.1" stroke="#7a7a7a" stroke-width="1"/><path d="M240 633.8V642.8" stroke="#8a8a8a" stroke-width="1"/><path d="M237.3 638.3L240 636.0L242.7 638.3L240 640.5z" fill="#6e6e6e"/>
</g>
<path d="M0.500 726V0.500H1153" fill="none" stroke="#000" stroke-width="1"/>
<path d="M0 725.5H1152.5V0" fill="none" stroke="#000" stroke-width="1"/>
<path d="M95.30000000000001 0.500H141.5M725.5 0.500H1147.5M1.500 725.5H289" fill="none" stroke="#787878" stroke-width="1"/>
</svg>
<svg style="left:1250px;top:190px;" width="26" height="24" viewBox="0 0 26 24"><path d="M11.300 2v4M16 14.500h7" stroke="#a8a8a8" stroke-width="1.300"/><path d="M8.800 11V9a2.500 2.500 0 0 1 5 0v2" fill="none" stroke="#a0a0a0" stroke-width="1.300"/><rect x="5" y="14" width="5" height="6" fill="#e08080"/><rect x="7" y="10.500" width="8.500" height="8.500" fill="#3f9a2c"/><rect x="9.500" y="13" width="3.500" height="3.500" fill="none" stroke="#7a8a20" stroke-width="1"/></svg>
<div style="left:84px;top:948px;width:1204px;height:4px;background:#101010;"></div>
<div style="left:1295px;top:184px;width:625px;height:1px;background:#0c0c0c;"></div>
<div style="left:1295px;top:184px;width:625px;height:19px;background:linear-gradient(90deg,#000 0%,#0a0000 6%,#2c0b0b 16%,#531717 26%,#7a2021 38%,#a3292b 50%,#c23638 62%,#c94a35 74%,#d26233 86%,#e18130 100%);"></div>
<span class="t" style="left:1301.3px;top:184.00px;height:20px;line-height:20px;font-size:14.5px;color:#ffffff;letter-spacing:0.076px;">Camera Control</span>
<svg style="left:1893px;top:188.0px;" width="11" height="11" viewBox="0 0 11 11"><rect x="0.500" y="0.500" width="10" height="10" rx="1.500" fill="none" stroke="#5a4a40" stroke-width="1"/><rect x="1.800" y="3.800" width="5.500" height="5.500" fill="none" stroke="#5a4a40" stroke-width="1"/><rect x="4" y="1.800" width="5.300" height="5.300" fill="none" stroke="#5a4a40" stroke-width="1"/></svg>
<svg style="left:1907px;top:188.0px;" width="11" height="11" viewBox="0 0 11 11"><rect x="0.500" y="0.500" width="10" height="10" rx="1.500" fill="none" stroke="#5a4a40" stroke-width="1"/><path d="M2.500 2.500l6 6M8.500 2.500l-6 6" stroke="#4a3a35" stroke-width="1.500"/></svg>
<span class="t" style="left:1346.2px;top:211.50px;height:20px;line-height:20px;font-size:14.5px;color:#ffffff;letter-spacing:-0.257px;">Camera:</span>
<div style="left:1407px;top:208.5px;width:403px;height:25.0px;background:linear-gradient(#505050,#484848);border:1px solid #5e5e5e;border-radius:3px;"></div>
<svg style="left:1791.5px;top:218.0px;" width="11" height="6" viewBox="0 0 11 6"><path d="M0 0h10.500l-5.200 5.500z" fill="#a6a6a6"/></svg>
<span class="t" style="left:1411.3px;top:211.30px;height:20px;line-height:20px;font-size:14.5px;color:#ffffff;letter-spacing:-0.094px;">Usb HDCamera</span>
<div style="left:1818px;top:208.5px;width:99px;height:25.0px;background:linear-gradient(#505050,#484848);border:1px solid #5e5e5e;border-radius:3px;"></div>
<svg style="left:1898px;top:218.0px;" width="11" height="6" viewBox="0 0 11 6"><path d="M0 0h10.500l-5.200 5.500z" fill="#a6a6a6"/></svg>
<span class="t" style="left:1823px;top:211.30px;height:20px;line-height:20px;font-size:14.5px;color:#ffffff;letter-spacing:-0.083px;">15 fps</span>
<div style="left:1298px;top:270.5px;width:1619px;height:77.5px;background:#4b4b4b;border:1px solid #585858;border-top:none;"></div>
<div style="left:1380px;top:239.8px;width:71px;height:30.7px;background:#434343;border:1px solid #4e4e4e;border-bottom:none;border-radius:3px 3px 0 0;"></div>
<div style="left:1452px;top:239.8px;width:52.7px;height:30.7px;background:#434343;border:1px solid #4e4e4e;border-bottom:none;border-radius:3px 3px 0 0;"></div>
<div style="left:1506px;top:239.8px;width:52.7px;height:30.7px;background:#434343;border:1px solid #4e4e4e;border-bottom:none;border-radius:3px 3px 0 0;"></div>
<div style="left:1560px;top:239.8px;width:52.7px;height:30.7px;background:#434343;border:1px solid #4e4e4e;border-bottom:none;border-radius:3px 3px 0 0;"></div>
<div style="left:1614px;top:239.8px;width:52.7px;height:30.7px;background:#434343;border:1px solid #4e4e4e;border-bottom:none;border-radius:3px 3px 0 0;"></div>
<div style="left:1668px;top:239.8px;width:52.7px;height:30.7px;background:#434343;border:1px solid #4e4e4e;border-bottom:none;border-radius:3px 3px 0 0;"></div>
<div style="left:1722px;top:239.8px;width:52.7px;height:30.7px;background:#434343;border:1px solid #4e4e4e;border-bottom:none;border-radius:3px 3px 0 0;"></div>
<div style="left:1776px;top:239.8px;width:52.7px;height:30.7px;background:#434343;border:1px solid #4e4e4e;border-bottom:none;border-radius:3px 3px 0 0;"></div>
<div style="left:1830px;top:239.8px;width:50px;height:30.7px;background:#434343;border:1px solid #4e4e4e;border-bottom:none;border-radius:3px 3px 0 0;"></div>
<div style="left:1298px;top:270px;width:1619px;height:1px;background:#585858;"></div>
<div style="left:1298px;top:238.5px;width:81.5px;height:33px;background:#4b4b4b;border:1px solid #5c5c5c;border-bottom:none;border-radius:3px 3px 0 0;"></div>
<span class="t" style="left:1312.2px;top:245.50px;height:20px;line-height:20px;font-size:14.5px;color:#ffffff;letter-spacing:0.003px;">Capture</span>
<span class="t" style="left:1394.5px;top:246.50px;height:20px;line-height:20px;font-size:14.5px;color:#ffffff;letter-spacing:0.234px;">Adjust</span>
<div style="left:1880px;top:238.5px;width:18px;height:32.5px;background:#474747;border:1px solid #5c5c5c;border-radius:2px;"></div>
<div style="left:1899px;top:238.5px;width:18px;height:32.5px;background:#474747;border:1px solid #5c5c5c;border-radius:2px;"></div>
<svg style="left:1885px;top:250px;" width="8" height="10" viewBox="0 0 8 10"><path d="M6 0.500v8l-5.500-4z" fill="#6a6a6a"/></svg>
<svg style="left:1904.5px;top:250px;" width="8" height="10" viewBox="0 0 8 10"><path d="M1 0.500v8l5.500-4z" fill="#6a6a6a"/></svg>
<svg style="left:1467px;top:246.5px;" width="18" height="18" viewBox="0 0 18 18"><rect x="0.700" y="0.700" width="16.600" height="16.600" fill="none" stroke="#f4f4f4" stroke-width="1.400"/><path d="M17 1v16H1z" fill="#f4f4f4"/><path d="M2.800 5.500h5M5.300 3v5" stroke="#f4f4f4" stroke-width="1.300"/><path d="M10.500 13.500h4.500" stroke="#434343" stroke-width="1.400"/></svg>
<svg style="left:1520px;top:245px;" width="20" height="20" viewBox="0 0 20 20"><circle cx="10" cy="10" r="4" fill="none" stroke="#f4f4f4" stroke-width="1.500"/><path d="M16.30 10.00L19.30 10.00" stroke="#f4f4f4" stroke-width="1.500"/><path d="M14.45 14.45L16.58 16.58" stroke="#f4f4f4" stroke-width="1.500"/><path d="M10.00 16.30L10.00 19.30" stroke="#f4f4f4" stroke-width="1.500"/><path d="M5.55 14.45L3.42 16.58" stroke="#f4f4f4" stroke-width="1.500"/><path d="M3.70 10.00L0.70 10.00" stroke="#f4f4f4" stroke-width="1.500"/><path d="M5.55 5.55L3.42 3.42" stroke="#f4f4f4" stroke-width="1.500"/><path d="M10.00 3.70L10.00 0.70" stroke="#f4f4f4" stroke-width="1.500"/><path d="M14.45 5.55L16.58 3.42" stroke="#f4f4f4" stroke-width="1.500"/></svg>
<svg style="left:1575px;top:246px;" width="18" height="18" viewBox="0 0 18 18"><circle cx="9" cy="9" r="7.700" fill="none" stroke="#f4f4f4" stroke-width="1.500"/><path d="M9 1.300a7.700 7.700 0 0 1 0 15.400z" fill="#f4f4f4"/></svg>
<svg style="left:1628px;top:245px;" width="20" height="20" viewBox="0 0 20 20"><path d="M4.700 12.300a5.400 5.400 0 0 1 7.600-7.600z" fill="#f4f4f4"/><path d="M2.500 17L17 2.500" stroke="#f4f4f4" stroke-width="1.400"/><path d="M1.70 8.50L-0.80 8.50" stroke="#f4f4f4" stroke-width="1.600"/><path d="M3.69 3.69L1.92 1.92" stroke="#f4f4f4" stroke-width="1.600"/><path d="M8.50 1.70L8.50 -0.80" stroke="#f4f4f4" stroke-width="1.600"/><path d="M8.30 13.60L18.30 13.60" stroke="#f4f4f4" stroke-width="1.500"/><path d="M10.80 9.27L15.80 17.93" stroke="#f4f4f4" stroke-width="1.500"/><path d="M15.80 9.27L10.80 17.93" stroke="#f4f4f4" stroke-width="1.500"/><path d="M16.50 13.60L17.59 12.30" stroke="#f4f4f4" stroke-width="0.900"/><path d="M16.50 13.60L17.59 14.90" stroke="#f4f4f4" stroke-width="0.900"/><path d="M14.90 16.37L16.57 16.67" stroke="#f4f4f4" stroke-width="0.900"/><path d="M14.90 16.37L14.32 17.97" stroke="#f4f4f4" stroke-width="0.900"/><path d="M11.70 16.37L12.28 17.97" stroke="#f4f4f4" stroke-width="0.900"/><path d="M11.70 16.37L10.03 16.67" stroke="#f4f4f4" stroke-width="0.900"/><path d="M10.10 13.60L9.01 14.90" stroke="#f4f4f4" stroke-width="0.900"/><path d="M10.10 13.60L9.01 12.30" stroke="#f4f4f4" stroke-width="0.900"/><path d="M11.70 10.83L10.03 10.53" stroke="#f4f4f4" stroke-width="0.900"/><path d="M11.70 10.83L12.28 9.23" stroke="#f4f4f4" stroke-width="0.900"/><path d="M14.90 10.83L14.32 9.23" stroke="#f4f4f4" stroke-width="0.900"/><path d="M14.90 10.83L16.57 10.53" stroke="#f4f4f4" stroke-width="0.900"/></svg>
<svg style="left:1683px;top:246px;" width="18" height="18" viewBox="0 0 18 18"><path d="M9.500 0.800c5 0 8 3.500 8 7.500 0 4.500-3 8.700-7.500 8.700-1.800 0-2.300-1-2-2.300 0.300-1.500-0.500-2.500-2-2.500-2.500 0-5.200-0.500-5.200-3.700 0-4.500 4-7.700 8.700-7.700z" fill="#f4f4f4"/><g fill="#434343"><circle cx="5" cy="7" r="1.400"/><circle cx="8.500" cy="4" r="1.400"/><circle cx="12.800" cy="5" r="1.400"/><circle cx="14.500" cy="9" r="1.400"/><circle cx="12.800" cy="13" r="1.400"/></g></svg>
<svg style="left:1736px;top:245px;" width="20" height="20" viewBox="0 0 20 20"><circle cx="10" cy="10" r="7" fill="none" stroke="#f4f4f4" stroke-width="1.600"/><path d="M10 0.500v3M10 16.500v3M0.500 10h3M16.500 10h3" stroke="#f4f4f4" stroke-width="1.600"/><circle cx="10" cy="10" r="3.600" fill="#f4f4f4"/><circle cx="11.300" cy="8.700" r="1.400" fill="#434343"/></svg>
<svg style="left:1791px;top:245px;" width="20" height="20" viewBox="0 0 20 20"><circle cx="7" cy="7" r="5.300" fill="none" stroke="#f4f4f4" stroke-width="1.800"/><path d="M11 11l6.500 6.500" stroke="#f4f4f4" stroke-width="2.800" stroke-linecap="round"/></svg>
<svg style="left:1844px;top:245px;" width="20" height="20" viewBox="0 0 20 20"><path d="M3 6h10" stroke="#f4f4f4" stroke-width="2.600"/><path d="M11.500 1l7 5-7 5z" fill="#f4f4f4"/><path d="M7 14.500h10" stroke="#f4f4f4" stroke-width="2.600"/><path d="M8.500 9.500l-7 5 7 5z" fill="#f4f4f4"/></svg>
<div style="left:1301.7px;top:288.8px;width:12px;height:7px;background:#00d61a;border-radius:3px;"></div>
<div style="left:1308.9px;top:287.0px;width:8.2px;height:10.6px;background:#e9e9e9;border-radius:3px;"></div>
<div style="left:1301.7px;top:323.8px;width:12px;height:7px;background:#00d61a;border-radius:3px;"></div>
<div style="left:1308.9px;top:322.0px;width:8.2px;height:10.6px;background:#e9e9e9;border-radius:3px;"></div>
<span class="t" style="left:1324.3px;top:284.20px;height:20px;line-height:20px;font-size:14.5px;color:#ffffff;letter-spacing:-0.637px;">Fade</span>
<span class="t" style="left:1324.3px;top:319.20px;height:20px;line-height:20px;font-size:14.5px;color:#ffffff;letter-spacing:-0.193px;">Show</span>
<div style="left:1509.3px;top:278.5px;width:404px;height:27.5px;background:linear-gradient(#565656,#454545);border:1px solid #616161;border-radius:3px;"></div>
<div style="left:1509.3px;top:313.5px;width:404px;height:27.5px;background:linear-gradient(#565656,#454545);border:1px solid #616161;border-radius:3px;"></div>
<span class="t" style="left:1511.3px;width:400px;text-align:center;top:284.00px;height:20px;line-height:20px;font-size:14.5px;color:#ffffff;letter-spacing:0.162px;">Update Overlay</span>
<span class="t" style="left:1511.3px;width:400px;text-align:center;top:319.00px;height:20px;line-height:20px;font-size:14.5px;color:#ffffff;letter-spacing:-0.305px;">Trace</span>
<svg style="left:1510px;top:352px;" width="194" height="146" viewBox="0 0 194 146"><defs>
<filter id="cn" x="0" y="0" width="100%" height="100%" color-interpolation-filters="sRGB">
<feTurbulence type="fractalNoise" baseFrequency="0.9" numOctaves="1" seed="3"/>
<feColorMatrix type="matrix" values="0 0 0 0 0.42  0 0 0 0 0.47  0 0 0 0 0.48  2.500 2.500 0 0 -2.500"/>
<feComposite in2="SourceGraphic" operator="in"/>
</filter>
<linearGradient id="pg" x1="0" y1="0" x2="0" y2="1"><stop offset="0" stop-color="#fff"/><stop offset="0.45" stop-color="#fff"/><stop offset="0.62" stop-color="#e6e0e0"/><stop offset="1" stop-color="#d3cbcb"/></linearGradient>
</defs>
<rect width="194" height="146" fill="#000"/>
<rect x="7" y="4.500" width="183.500" height="130" rx="24" fill="#0d1113"/>
<rect x="7" y="4.500" width="183.500" height="130" rx="24" fill="#fff" filter="url(#cn)"/>
<path d="M38 13L81 12 157 10.500 157.800 130.500 102 132.500 37.300 130z" fill="url(#pg)"/>
<polygon points="89.500,46 113.600,62 140,44.500 131.600,76 156.800,96.400 123.900,97.100 113.600,126.400 104.100,96.400 74.100,95 96.300,76.700" fill="#060606"/>
<rect x="21.500" y="58.500" width="14" height="14" rx="2" fill="#26262a" stroke="#e8e4f0" stroke-width="1.300"/>
<rect x="158" y="69" width="15.500" height="15.500" rx="2" fill="#101014" stroke="#e8e4f0" stroke-width="1.500"/>
</svg>
<div style="left:1296.5px;top:501.5px;width:111.0px;height:29.0px;background:#1c1c1c;border:1px solid #333333;border-top:none;border-radius:0 0 3px 3px;"></div>
<span class="t" style="left:1152.0px;width:400px;text-align:center;top:507.80px;height:20px;line-height:20px;font-size:14.5px;color:#ffffff;letter-spacing:-0.147px;">Cuts / Layers</span>
<div style="left:1410px;top:501.5px;width:64.5px;height:29.0px;background:#1c1c1c;border:1px solid #333333;border-top:none;border-radius:0 0 3px 3px;"></div>
<span class="t" style="left:1242.25px;width:400px;text-align:center;top:507.80px;height:20px;line-height:20px;font-size:14.5px;color:#ffffff;letter-spacing:0.511px;">Move</span>
<div style="left:1476.5px;top:501.5px;width:132.0px;height:32.0px;background:#1f1f1f;border:1px solid #3a3a3a;border-top:none;border-radius:0 0 3px 3px;"></div>
<span class="t" style="left:1342.5px;width:400px;text-align:center;top:508.30px;height:20px;line-height:20px;font-size:14.5px;color:#ffffff;letter-spacing:0.119px;">Camera Control</span>
<div style="left:1610.5px;top:501.5px;width:113.0px;height:29.0px;background:#1c1c1c;border:1px solid #333333;border-top:none;border-radius:0 0 3px 3px;"></div>
<span class="t" style="left:1467.0px;width:400px;text-align:center;top:507.80px;height:20px;line-height:20px;font-size:14.5px;color:#ffffff;letter-spacing:0.194px;">Variable Text</span>
<div style="left:1725.5px;top:501.5px;width:138.5px;height:29.0px;background:#1c1c1c;border:1px solid #333333;border-top:none;border-radius:0 0 3px 3px;"></div>
<span class="t" style="left:1594.75px;width:400px;text-align:center;top:507.80px;height:20px;line-height:20px;font-size:14.5px;color:#ffffff;letter-spacing:0.029px;">Shape Properties</span>
<svg style="left:1601px;top:538px;" width="18" height="3" viewBox="0 0 18 3"><rect x="0" y="0" width="2" height="2" fill="#7a7a7a"/><rect x="3" y="0" width="2" height="2" fill="#7a7a7a"/><rect x="6" y="0" width="2" height="2" fill="#7a7a7a"/><rect x="9" y="0" width="2" height="2" fill="#7a7a7a"/><rect x="12" y="0" width="2" height="2" fill="#7a7a7a"/><rect x="15" y="0" width="2" height="2" fill="#7a7a7a"/></svg>
<div style="left:1295px;top:542px;width:625px;height:19.5px;background:linear-gradient(90deg,#000 0%,#0a0000 6%,#2c0b0b 16%,#531717 26%,#7a2021 38%,#a3292b 50%,#c23638 62%,#c94a35 74%,#d26233 86%,#e18130 100%);"></div>
<span class="t" style="left:1301.3px;top:543.25px;height:20px;line-height:20px;font-size:14.5px;color:#ffffff;letter-spacing:-0.574px;">Laser</span>
<svg style="left:1893px;top:546.25px;" width="11" height="11" viewBox="0 0 11 11"><rect x="0.500" y="0.500" width="10" height="10" rx="1.500" fill="none" stroke="#5a4a40" stroke-width="1"/><rect x="1.800" y="3.800" width="5.500" height="5.500" fill="none" stroke="#5a4a40" stroke-width="1"/><rect x="4" y="1.800" width="5.300" height="5.300" fill="none" stroke="#5a4a40" stroke-width="1"/></svg>
<svg style="left:1907px;top:546.25px;" width="11" height="11" viewBox="0 0 11 11"><rect x="0.500" y="0.500" width="10" height="10" rx="1.500" fill="none" stroke="#5a4a40" stroke-width="1"/><path d="M2.500 2.500l6 6M8.500 2.500l-6 6" stroke="#4a3a35" stroke-width="1.500"/></svg>
<svg style="left:1292px;top:560px;" width="3" height="18" viewBox="0 0 3 18"><rect x="0" y="0" width="2" height="2" fill="#6c6c6c"/><rect x="0" y="3" width="2" height="2" fill="#6c6c6c"/><rect x="0" y="6" width="2" height="2" fill="#6c6c6c"/><rect x="0" y="9" width="2" height="2" fill="#6c6c6c"/><rect x="0" y="12" width="2" height="2" fill="#6c6c6c"/><rect x="0" y="15" width="2" height="2" fill="#6c6c6c"/></svg>
<span class="t" style="left:1296.7px;top:562.50px;height:20px;line-height:20px;font-size:14.5px;color:#ffffff;letter-spacing:0.062px;">Disconnected</span>
<div style="left:1297px;top:584px;width:151.79999999999995px;height:47.5px;background:linear-gradient(#565656,#454545);border:1px solid #616161;border-radius:3px;"></div>
<div style="left:1454.2px;top:584px;width:150.79999999999995px;height:47.5px;background:linear-gradient(#565656,#454545);border:1px solid #616161;border-radius:3px;"></div>
<div style="left:1610px;top:584px;width:152px;height:47.5px;background:linear-gradient(#565656,#454545);border:1px solid #616161;border-radius:3px;"></div>
<div style="left:1767.2px;top:584px;width:150.29999999999995px;height:47.5px;background:linear-gradient(#565656,#454545);border:1px solid #616161;border-radius:3px;"></div>
<div style="left:1297px;top:635px;width:151.79999999999995px;height:47.5px;background:linear-gradient(#565656,#454545);border:1px solid #616161;border-radius:3px;"></div>
<div style="left:1454.2px;top:635px;width:150.79999999999995px;height:47.5px;background:linear-gradient(#565656,#454545);border:1px solid #616161;border-radius:3px;"></div>
<div style="left:1610px;top:635px;width:152px;height:47.5px;background:linear-gradient(#565656,#454545);border:1px solid #616161;border-radius:3px;"></div>
<div style="left:1767.2px;top:635px;width:150.29999999999995px;height:47.5px;background:linear-gradient(#565656,#454545);border:1px solid #616161;border-radius:3px;"></div>
<div style="left:1297px;top:687.2px;width:149px;height:24.5px;background:linear-gradient(#565656,#454545);border:1px solid #616161;border-radius:3px;"></div>
<div style="left:1454.2px;top:686.5px;width:150.0px;height:26.0px;background:linear-gradient(#565656,#454545);border:1px solid #616161;border-radius:3px;"></div>
<div style="left:1343px;top:598.3px;width:6.2px;height:19.5px;background:#f2f2f2;border-radius:1px;"></div>
<div style="left:1354.7px;top:598.3px;width:6.2px;height:19.5px;background:#f2f2f2;border-radius:1px;"></div>
<span class="t" style="left:1364.5px;top:599.00px;height:20px;line-height:20px;font-size:14.5px;color:#ffffff;letter-spacing:-1.022px;">Pause</span>
<div style="left:1502px;top:598.3px;width:20px;height:19.5px;background:#f2f2f2;border-radius:1px;"></div>
<span class="t" style="left:1524.2px;top:599.00px;height:20px;line-height:20px;font-size:14.5px;color:#ffffff;letter-spacing:0.118px;">Stop</span>
<svg style="left:1659px;top:598px;" width="18" height="21" viewBox="0 0 18 21"><path d="M0.500 0.500l17 10-17 10z" fill="#6b6b6b"/></svg>
<span class="t" style="left:1680.5px;top:599.00px;height:20px;line-height:20px;font-size:14.5px;color:#8c8c8c;letter-spacing:-0.064px;">Start</span>
<svg style="left:1818px;top:599px;" width="12" height="18" viewBox="0 0 12 18"><path d="M6 0.500l5.500 6.500h-3.300v2.500h-4.400v-2.500h-3.300z" fill="#f2f2f2"/><rect x="3.800" y="10.500" width="4.400" height="2" fill="#f2f2f2"/><rect x="3.800" y="13.700" width="4.400" height="2.500" fill="#f2f2f2"/></svg>
<span class="t" style="left:1834.5px;top:599.00px;height:20px;line-height:20px;font-size:14.5px;color:#ffffff;letter-spacing:-0.516px;">Send</span>
<svg style="left:1340px;top:649px;" width="20" height="20" viewBox="0 0 20 20"><path d="M7.500 1.300h-6.200v6.200M12.500 1.300h6.200v6.200M7.500 18.700h-6.200v-6.200M12.500 18.700h6.200v-6.200" fill="none" stroke="#f2f2f2" stroke-width="2.400"/></svg>
<span class="t" style="left:1362.5px;top:650.00px;height:20px;line-height:20px;font-size:14.5px;color:#ffffff;letter-spacing:-0.318px;">Frame</span>
<svg style="left:1496.5px;top:649px;" width="21" height="21" viewBox="0 0 21 21"><circle cx="10.300" cy="10" r="8.700" fill="none" stroke="#f2f2f2" stroke-width="2" stroke-dasharray="6.300 2.800" stroke-dashoffset="2"/></svg>
<span class="t" style="left:1519.5px;top:650.00px;height:20px;line-height:20px;font-size:14.5px;color:#ffffff;letter-spacing:-0.318px;">Frame</span>
<span class="t" style="left:1646.2px;top:650.00px;height:20px;line-height:20px;font-size:14.5px;color:#ffffff;letter-spacing:-0.082px;">Save RD file</span>
<span class="t" style="left:1805.3px;top:650.00px;height:20px;line-height:20px;font-size:14.5px;color:#ffffff;letter-spacing:-0.058px;">Run RD file</span>
<svg style="left:1339px;top:689.5px;" width="20" height="19" viewBox="0 0 20 19"><path d="M1 9.500l9-8.500 9 8.500" fill="none" stroke="#f2f2f2" stroke-width="2"/><path d="M3.500 8.500v9.500h13v-9.500" fill="none" stroke="#f2f2f2" stroke-width="2.200"/><rect x="8" y="11.500" width="4" height="6.500" fill="#f2f2f2"/><rect x="4" y="1.500" width="2.500" height="4.500" fill="#f2f2f2"/></svg>
<span class="t" style="left:1361.7px;top:691.00px;height:20px;line-height:20px;font-size:14.5px;color:#ffffff;letter-spacing:0.331px;">Home</span>
<span class="t" style="left:1488px;top:691.00px;height:20px;line-height:20px;font-size:14.5px;color:#ffffff;letter-spacing:0.319px;">Go to Origin</span>
<span class="t" style="left:1690px;top:691.00px;height:20px;line-height:20px;font-size:14.5px;color:#ffffff;letter-spacing:-0.046px;">Start From:</span>
<div style="left:1769.2px;top:686.5px;width:148.29999999999995px;height:25.200000000000045px;background:linear-gradient(#505050,#484848);border:1px solid #5e5e5e;border-radius:3px;"></div>
<svg style="left:1899.5px;top:696.1px;" width="11" height="6" viewBox="0 0 11 6"><path d="M0 0h10.500l-5.200 5.500z" fill="#a6a6a6"/></svg>
<span class="t" style="left:1773.3px;top:689.40px;height:20px;line-height:20px;font-size:14.5px;color:#ffffff;letter-spacing:0.154px;">Absolute Coords</span>
<span class="t" style="left:1694.2px;top:737.00px;height:20px;line-height:20px;font-size:14.5px;color:#ffffff;letter-spacing:0.172px;">Job Origin</span>
<div style="left:1771.3px;top:718px;width:145.4px;height:58.5px;background:#1c1c1c;border:1px solid #2b2b2b;border-radius:3px;"></div>
<svg style="left:1771.3px;top:718px;" width="146" height="59" viewBox="0 0 146 59"><circle cx="10.9" cy="10.8" r="7" fill="#1e1e1e" stroke="#171717" stroke-width="1"/><circle cx="57.9" cy="10.8" r="7" fill="#1e1e1e" stroke="#171717" stroke-width="1"/><circle cx="104.5" cy="10.8" r="7" fill="#1e1e1e" stroke="#171717" stroke-width="1"/><circle cx="10.9" cy="28.7" r="7" fill="#1e1e1e" stroke="#171717" stroke-width="1"/><circle cx="57.9" cy="28.7" r="7" fill="#1e1e1e" stroke="#171717" stroke-width="1"/><circle cx="104.5" cy="28.7" r="7" fill="#1e1e1e" stroke="#171717" stroke-width="1"/><circle cx="10.9" cy="46.7" r="7" fill="#1e1e1e" stroke="#171717" stroke-width="1"/><circle cx="57.9" cy="46.7" r="7" fill="#1e1e1e" stroke="#171717" stroke-width="1"/><circle cx="104.5" cy="46.7" r="7" fill="#1e1e1e" stroke="#171717" stroke-width="1"/><circle cx="104.5" cy="10.8" r="3.800" fill="#8a8a8a"/></svg>
<div style="left:1304px;top:786.7px;width:8px;height:6.6px;background:#a80000;border-radius:0 2px 2px 0;"></div>
<div style="left:1295.8px;top:785px;width:8.5px;height:10.5px;background:#e3dcdc;border-radius:3px;"></div>
<span class="t" style="left:1319.2px;top:782.00px;height:20px;line-height:20px;font-size:14.5px;color:#ffffff;letter-spacing:-0.051px;">Cut Selected Graphics</span>
<div style="left:1304px;top:814.7px;width:8px;height:6.6px;background:#303030;border-radius:0 2px 2px 0;"></div>
<div style="left:1295.8px;top:813px;width:8.5px;height:10.5px;background:#c4c4c4;border-radius:3px;"></div>
<span class="t" style="left:1319.2px;top:809.80px;height:20px;line-height:20px;font-size:14.5px;color:#8a8a8a;letter-spacing:0.082px;">Use Selection Origin</span>
<div style="left:1612px;top:778px;width:305.79999999999995px;height:24.5px;background:linear-gradient(#565656,#454545);border:1px solid #616161;border-radius:3px;"></div>
<div style="left:1612px;top:805.3px;width:305.79999999999995px;height:26.0px;background:linear-gradient(#565656,#454545);border:1px solid #616161;border-radius:3px;"></div>
<svg style="left:1692px;top:780px;" width="20" height="20" viewBox="0 0 20 20"><path d="M10 0.500v5M10 14v5.500M0.500 10h4M15.500 10h4" stroke="#f0f0f0" stroke-width="1.600"/><path d="M10 6.500v7M6.500 10h7" stroke="#f03a20" stroke-width="1.800"/></svg>
<span class="t" style="left:1714.2px;top:782.00px;height:20px;line-height:20px;font-size:14.5px;color:#ffffff;letter-spacing:-0.073px;">Show Last Position</span>
<span class="t" style="left:1693px;top:810.30px;height:20px;line-height:20px;font-size:14.5px;color:#ffffff;letter-spacing:0.333px;">Optimization Settings</span>
<div style="left:1297px;top:835.3px;width:78px;height:26.40000000000009px;background:linear-gradient(#565656,#454545);border:1px solid #616161;border-radius:3px;"></div>
<span class="t" style="left:1310.3px;top:840.00px;height:20px;line-height:20px;font-size:14.5px;color:#ffffff;letter-spacing:-0.096px;">Devices</span>
<div style="left:1383px;top:835.3px;width:263.70000000000005px;height:25.5px;background:linear-gradient(#505050,#484848);border:1px solid #5e5e5e;border-radius:3px;"></div>
<svg style="left:1628.7px;top:845.05px;" width="11" height="6" viewBox="0 0 11 6"><path d="M0 0h10.500l-5.200 5.500z" fill="#a6a6a6"/></svg>
<span class="t" style="left:1387.5px;top:838.35px;height:20px;line-height:20px;font-size:14.5px;color:#ffffff;letter-spacing:0.286px;">(Auto)</span>
<div style="left:1655px;top:835.3px;width:262.79999999999995px;height:25.5px;background:linear-gradient(#505050,#484848);border:1px solid #5e5e5e;border-radius:3px;"></div>
<svg style="left:1899.5px;top:845.05px;" width="11" height="6" viewBox="0 0 11 6"><path d="M0 0h10.500l-5.200 5.500z" fill="#a6a6a6"/></svg>
<span class="t" style="left:1683.3px;top:838.35px;height:20px;line-height:20px;font-size:14.5px;color:#ffffff;letter-spacing:-0.207px;">Onyx-R</span>
<svg style="left:1660px;top:838px;" width="20" height="20" viewBox="0 0 20 20"><rect x="0.500" y="0.500" width="19" height="19" fill="#2b8be2" stroke="#e8f0ff" stroke-width="1"/><ellipse cx="10" cy="8" rx="7.500" ry="4.300" fill="none" stroke="#fff" stroke-width="1"/><text x="10" y="10.300" font-family="Liberation Serif" font-size="6.500" font-style="italic" font-weight="bold" fill="#fff" text-anchor="middle">RD</text><path d="M3 15.500h14" stroke="#9cc8f4" stroke-width="1.500" stroke-dasharray="1.500 0.700"/></svg>
<div style="left:1295.8px;top:916.5px;width:62.2px;height:31px;background:#1f1f1f;border:1px solid #3a3a3a;border-top:none;border-radius:0 0 3px 3px;"></div>
<span class="t" style="left:1310.2px;top:925.00px;height:20px;line-height:20px;font-size:14.5px;color:#ffffff;letter-spacing:-0.554px;">Laser</span>
<div style="left:1360.8px;top:916.5px;width:130.7px;height:29px;background:#1c1c1c;border:1px solid #333;border-top:none;border-radius:0 0 3px 3px;"></div>
<span class="t" style="left:1374.3px;top:924.00px;height:20px;line-height:20px;font-size:14.5px;color:#ffffff;letter-spacing:0.224px;">Material Library</span>
<div class="hl" style="left:0px;top:951px;width:1920px;height:1px;"></div>
<div class="hl" style="left:0px;top:989px;width:1920px;height:1px;"></div>
<svg style="left:6px;top:962px;" width="6" height="18" viewBox="0 0 6 18"><rect x="0" y="0" width="2" height="2" fill="#6c6c6c"/><rect x="3" y="0" width="2" height="2" fill="#6c6c6c"/><rect x="0" y="3" width="2" height="2" fill="#6c6c6c"/><rect x="3" y="3" width="2" height="2" fill="#6c6c6c"/><rect x="0" y="6" width="2" height="2" fill="#6c6c6c"/><rect x="3" y="6" width="2" height="2" fill="#6c6c6c"/><rect x="0" y="9" width="2" height="2" fill="#6c6c6c"/><rect x="3" y="9" width="2" height="2" fill="#6c6c6c"/><rect x="0" y="12" width="2" height="2" fill="#6c6c6c"/><rect x="3" y="12" width="2" height="2" fill="#6c6c6c"/><rect x="0" y="15" width="2" height="2" fill="#6c6c6c"/><rect x="3" y="15" width="2" height="2" fill="#6c6c6c"/></svg>
<div style="left:16.5px;top:956.5px;width:29.5px;height:28.5px;border:1px solid #5a5a5a;border-radius:3px;background:#2a2a2a;"></div>
<div style="left:18.5px;top:958.5px;width:25.5px;height:24.5px;background:#000000;"></div>
<span class="t" style="left:-169.4px;width:400px;text-align:center;top:959.30px;height:20px;line-height:20px;font-size:11.8px;color:#ffffff;letter-spacing:-0.25px;letter-spacing:0;">00</span>
<div style="left:52px;top:958px;width:24px;height:24px;background:#0000FF;"></div>
<span class="t" style="left:-136.6px;width:400px;text-align:center;top:959.30px;height:20px;line-height:20px;font-size:11.8px;color:#ffffff;letter-spacing:-0.25px;letter-spacing:0;">01</span>
<div style="left:85px;top:958px;width:24px;height:24px;background:#FF0000;"></div>
<span class="t" style="left:-103.6px;width:400px;text-align:center;top:959.30px;height:20px;line-height:20px;font-size:11.8px;color:#ffffff;letter-spacing:-0.25px;letter-spacing:0;">02</span>
<div style="left:118px;top:958px;width:24px;height:24px;background:#00E000;"></div>
<span class="t" style="left:-70.6px;width:400px;text-align:center;top:959.30px;height:20px;line-height:20px;font-size:11.8px;color:#000000;letter-spacing:-0.25px;letter-spacing:0;">03</span>
<div style="left:151px;top:958px;width:24px;height:24px;background:#D0D000;"></div>
<span class="t" style="left:-37.599999999999994px;width:400px;text-align:center;top:959.30px;height:20px;line-height:20px;font-size:11.8px;color:#000000;letter-spacing:-0.25px;letter-spacing:0;">04</span>
<div style="left:184px;top:958px;width:24px;height:24px;background:#FF8000;"></div>
<span class="t" style="left:-4.599999999999994px;width:400px;text-align:center;top:959.30px;height:20px;line-height:20px;font-size:11.8px;color:#000000;letter-spacing:-0.25px;letter-spacing:0;">05</span>
<div style="left:217px;top:958px;width:24px;height:24px;background:#00E0E0;"></div>
<span class="t" style="left:28.400000000000006px;width:400px;text-align:center;top:959.30px;height:20px;line-height:20px;font-size:11.8px;color:#000000;letter-spacing:-0.25px;letter-spacing:0;">06</span>
<div style="left:250px;top:958px;width:24px;height:24px;background:#FF00FF;"></div>
<span class="t" style="left:61.39999999999998px;width:400px;text-align:center;top:959.30px;height:20px;line-height:20px;font-size:11.8px;color:#ffffff;letter-spacing:-0.25px;letter-spacing:0;">07</span>
<div style="left:283px;top:958px;width:24px;height:24px;background:#B4B4B4;"></div>
<span class="t" style="left:94.39999999999998px;width:400px;text-align:center;top:959.30px;height:20px;line-height:20px;font-size:11.8px;color:#000000;letter-spacing:-0.25px;letter-spacing:0;">08</span>
<div style="left:316px;top:958px;width:24px;height:24px;background:#0000A0;"></div>
<span class="t" style="left:127.39999999999998px;width:400px;text-align:center;top:959.30px;height:20px;line-height:20px;font-size:11.8px;color:#ffffff;letter-spacing:-0.25px;letter-spacing:0;">09</span>
<div style="left:349px;top:958px;width:24px;height:24px;background:#A00000;"></div>
<span class="t" style="left:160.39999999999998px;width:400px;text-align:center;top:959.30px;height:20px;line-height:20px;font-size:11.8px;color:#ffffff;letter-spacing:-0.25px;letter-spacing:0;">10</span>
<div style="left:382px;top:958px;width:24px;height:24px;background:#00A000;"></div>
<span class="t" style="left:193.39999999999998px;width:400px;text-align:center;top:959.30px;height:20px;line-height:20px;font-size:11.8px;color:#ffffff;letter-spacing:-0.25px;letter-spacing:0;">11</span>
<div style="left:415px;top:958px;width:24px;height:24px;background:#A0A000;"></div>
<span class="t" style="left:226.39999999999998px;width:400px;text-align:center;top:959.30px;height:20px;line-height:20px;font-size:11.8px;color:#000000;letter-spacing:-0.25px;letter-spacing:0;">12</span>
<div style="left:448px;top:958px;width:24px;height:24px;background:#C08000;"></div>
<span class="t" style="left:259.4px;width:400px;text-align:center;top:959.30px;height:20px;line-height:20px;font-size:11.8px;color:#000000;letter-spacing:-0.25px;letter-spacing:0;">13</span>
<div style="left:481px;top:958px;width:24px;height:24px;background:#00A0FF;"></div>
<span class="t" style="left:292.4px;width:400px;text-align:center;top:959.30px;height:20px;line-height:20px;font-size:11.8px;color:#ffffff;letter-spacing:-0.25px;letter-spacing:0;">14</span>
<div style="left:514px;top:958px;width:24px;height:24px;background:#A000A0;"></div>
<span class="t" style="left:325.4px;width:400px;text-align:center;top:959.30px;height:20px;line-height:20px;font-size:11.8px;color:#ffffff;letter-spacing:-0.25px;letter-spacing:0;">15</span>
<div style="left:547px;top:958px;width:24px;height:24px;background:#808080;"></div>
<span class="t" style="left:358.4px;width:400px;text-align:center;top:959.30px;height:20px;line-height:20px;font-size:11.8px;color:#ffffff;letter-spacing:-0.25px;letter-spacing:0;">16</span>
<div style="left:580px;top:958px;width:24px;height:24px;background:#7D87B9;"></div>
<span class="t" style="left:391.4px;width:400px;text-align:center;top:959.30px;height:20px;line-height:20px;font-size:11.8px;color:#000000;letter-spacing:-0.25px;letter-spacing:0;">17</span>
<div style="left:613px;top:958px;width:24px;height:24px;background:#BB7784;"></div>
<span class="t" style="left:424.4px;width:400px;text-align:center;top:959.30px;height:20px;line-height:20px;font-size:11.8px;color:#000000;letter-spacing:-0.25px;letter-spacing:0;">18</span>
<div style="left:646px;top:958px;width:24px;height:24px;background:#4A6FE3;"></div>
<span class="t" style="left:457.4px;width:400px;text-align:center;top:959.30px;height:20px;line-height:20px;font-size:11.8px;color:#ffffff;letter-spacing:-0.25px;letter-spacing:0;">19</span>
<div style="left:679px;top:958px;width:24px;height:24px;background:#D33F6A;"></div>
<span class="t" style="left:490.4px;width:400px;text-align:center;top:959.30px;height:20px;line-height:20px;font-size:11.8px;color:#ffffff;letter-spacing:-0.25px;letter-spacing:0;">20</span>
<div style="left:712px;top:958px;width:24px;height:24px;background:#8CD78C;"></div>
<span class="t" style="left:523.4px;width:400px;text-align:center;top:959.30px;height:20px;line-height:20px;font-size:11.8px;color:#000000;letter-spacing:-0.25px;letter-spacing:0;">21</span>
<div style="left:745px;top:958px;width:24px;height:24px;background:#F0B98D;"></div>
<span class="t" style="left:556.4px;width:400px;text-align:center;top:959.30px;height:20px;line-height:20px;font-size:11.8px;color:#000000;letter-spacing:-0.25px;letter-spacing:0;">22</span>
<div style="left:778px;top:958px;width:24px;height:24px;background:#F6C4E1;"></div>
<span class="t" style="left:589.4px;width:400px;text-align:center;top:959.30px;height:20px;line-height:20px;font-size:11.8px;color:#000000;letter-spacing:-0.25px;letter-spacing:0;">23</span>
<div style="left:811px;top:958px;width:24px;height:24px;background:#FA9ED4;"></div>
<span class="t" style="left:622.4px;width:400px;text-align:center;top:959.30px;height:20px;line-height:20px;font-size:11.8px;color:#000000;letter-spacing:-0.25px;letter-spacing:0;">24</span>
<div style="left:844px;top:958px;width:24px;height:24px;background:#500A78;"></div>
<span class="t" style="left:655.4px;width:400px;text-align:center;top:959.30px;height:20px;line-height:20px;font-size:11.8px;color:#ffffff;letter-spacing:-0.25px;letter-spacing:0;">25</span>
<div style="left:877px;top:958px;width:24px;height:24px;background:#B45A00;"></div>
<span class="t" style="left:688.4px;width:400px;text-align:center;top:959.30px;height:20px;line-height:20px;font-size:11.8px;color:#ffffff;letter-spacing:-0.25px;letter-spacing:0;">26</span>
<div style="left:910px;top:958px;width:24px;height:24px;background:#004754;"></div>
<span class="t" style="left:721.4px;width:400px;text-align:center;top:959.30px;height:20px;line-height:20px;font-size:11.8px;color:#ffffff;letter-spacing:-0.25px;letter-spacing:0;">27</span>
<div style="left:943px;top:958px;width:24px;height:24px;background:#86FA88;"></div>
<span class="t" style="left:754.4px;width:400px;text-align:center;top:959.30px;height:20px;line-height:20px;font-size:11.8px;color:#000000;letter-spacing:-0.25px;letter-spacing:0;">28</span>
<div style="left:976px;top:958px;width:24px;height:24px;background:#FFDB66;"></div>
<span class="t" style="left:787.4px;width:400px;text-align:center;top:959.30px;height:20px;line-height:20px;font-size:11.8px;color:#000000;letter-spacing:-0.25px;letter-spacing:0;">29</span>
<div style="left:1016.5px;top:958px;width:24.5px;height:24px;background:#F36926;"></div>
<span class="t" style="left:828.7px;width:400px;text-align:center;top:959.30px;height:20px;line-height:20px;font-size:11.8px;color:#202020;letter-spacing:-0.25px;letter-spacing:0;">T1</span>
<div style="left:1050px;top:958px;width:24px;height:24px;background:#0C96D9;"></div>
<span class="t" style="left:862px;width:400px;text-align:center;top:959.30px;height:20px;line-height:20px;font-size:11.8px;color:#ffffff;letter-spacing:-0.25px;letter-spacing:0;">T2</span>
<div style="left:2.8px;top:1002.0999999999999px;width:9px;height:6.4px;background:#00d61a;border-radius:3px 0 0 3px;"></div>
<div style="left:10.1px;top:999.8px;width:8.3px;height:11px;background:#e6ece6;border-radius:3.500px;"></div>
<span class="t" style="left:25.3px;top:997.00px;height:20px;line-height:20px;font-size:14.5px;color:#ffffff;letter-spacing:0.286px;">Move</span>
<div style="left:77.8px;top:1002.0999999999999px;width:9px;height:6.4px;background:#00d61a;border-radius:3px 0 0 3px;"></div>
<div style="left:85.1px;top:999.8px;width:8.3px;height:11px;background:#e6ece6;border-radius:3.500px;"></div>
<span class="t" style="left:100.3px;top:997.00px;height:20px;line-height:20px;font-size:14.5px;color:#ffffff;letter-spacing:-0.377px;">Size</span>
<div style="left:142.5px;top:1002.0999999999999px;width:9px;height:6.4px;background:#00d61a;border-radius:3px 0 0 3px;"></div>
<div style="left:149.8px;top:999.8px;width:8.3px;height:11px;background:#e6ece6;border-radius:3.500px;"></div>
<span class="t" style="left:165.4px;top:997.00px;height:20px;line-height:20px;font-size:14.5px;color:#ffffff;letter-spacing:0.097px;">Rotate</span>
<div style="left:224.6px;top:1002.0999999999999px;width:9px;height:6.4px;background:#00d61a;border-radius:3px 0 0 3px;"></div>
<div style="left:231.9px;top:999.8px;width:8.3px;height:11px;background:#e6ece6;border-radius:3.500px;"></div>
<span class="t" style="left:247.1px;top:997.00px;height:20px;line-height:20px;font-size:14.5px;color:#ffffff;letter-spacing:-0.338px;">Shear</span>
<span class="t" style="left:311px;top:997.00px;height:20px;line-height:20px;font-size:14.5px;color:#ffffff;letter-spacing:-0.204px;">x: 365.00, y: 40.00 mm</span>
<span class="t" style="left:931px;top:997.00px;height:20px;line-height:20px;font-size:14.5px;color:#ffffff;letter-spacing:0.314px;">No device found</span>
<div style="left:0px;top:1020px;width:1920px;height:60px;background:#1c1c1c;"></div>
<div style="left:0px;top:1020px;width:1920px;height:1px;background:#3b3b3b;"></div>
<svg style="left:28px;top:1028px;" width="34" height="40" viewBox="0 0 34 40"><defs><linearGradient id="th" x1="0" y1="0" x2="0" y2="1"><stop offset="0" stop-color="#b0a0d0"/><stop offset="0.3" stop-color="#f04a70"/><stop offset="0.7" stop-color="#7070d0"/><stop offset="1" stop-color="#2a90e0"/></linearGradient></defs>
<path d="M5.500 13a3.500 3.500 0 0 1 7 0v12.500a6 6 0 1 1-7 0z" fill="#2a8ae0" stroke="#8cc8ff" stroke-width="2"/><rect x="7.300" y="12" width="3.400" height="14" rx="1.700" fill="url(#th)"/>
<path d="M20.300 20v8M17.300 26.500h6l-3 5z" stroke="#2a5be8" stroke-width="2" fill="#2a5be8"/>
<circle cx="22" cy="10.800" r="10" fill="#ff9aa9"/></svg>
<span class="t" style="left:-150px;width:400px;text-align:center;top:1029.00px;height:20px;line-height:20px;font-size:14px;color:#111;letter-spacing:-0.25px;letter-spacing:0;">3</span>
<svg style="left:423px;top:1036px;" width="29" height="29" viewBox="0 0 29 29"><defs><linearGradient id="wl" gradientUnits="userSpaceOnUse" x1="0" y1="0" x2="29" y2="29"><stop offset="0" stop-color="#7cd6ff"/><stop offset="1" stop-color="#0a98f2"/></linearGradient></defs><g fill="url(#wl)"><rect x="0" y="0" width="13.800" height="13.800" rx="0.800"/><rect x="15.200" y="0" width="13.800" height="13.800" rx="0.800"/><rect x="0" y="15.200" width="13.800" height="13.800" rx="0.800"/><rect x="15.200" y="15.200" width="13.800" height="13.800" rx="0.800"/></g></svg>
<svg style="left:478px;top:1035px;" width="30" height="30" viewBox="0 0 30 30"><circle cx="13.300" cy="13" r="10.300" fill="#4a4a4a" stroke="#f4f4f4" stroke-width="2.600"/><path d="M20.800 20.500l6.500 7" stroke="#d8d8d8" stroke-width="3" stroke-linecap="round"/></svg>
<svg style="left:532px;top:1035px;" width="32" height="30" viewBox="0 0 32 30"><defs><linearGradient id="tv" x1="0" y1="0" x2="1" y2="1"><stop offset="0" stop-color="#ffffff"/><stop offset="1" stop-color="#c8c8c8"/></linearGradient></defs><rect x="1" y="8.800" width="22.300" height="19.500" rx="2" fill="#5c5c5c"/><rect x="8.500" y="1.300" width="22.500" height="19.700" rx="2" fill="url(#tv)"/><rect x="8.500" y="8.800" width="14.800" height="12.200" fill="#a8a8a8" opacity="0.700"/></svg>
<svg style="left:587px;top:1034px;" width="31" height="31" viewBox="0 0 31 31"><circle cx="11" cy="6" r="4.800" fill="#7b83eb"/><circle cx="22.500" cy="8.500" r="3.800" fill="#5a62d8"/><path d="M5 12.500h14a1.500 1.500 0 0 1 1.500 1.500v9a7.500 7.500 0 0 1-15 0z" fill="#7b83eb"/><path d="M18 13h9.500a1.500 1.500 0 0 1 1.500 1.500v7.500a5.500 5.500 0 0 1-11 0z" fill="#4f58ca"/><rect x="0.500" y="13.500" width="12.500" height="12.500" rx="1.500" fill="#3a3fa8"/><path d="M4 16.500h5.500M6.800 16.500v7" stroke="#fff" stroke-width="1.800"/></svg>
<svg style="left:642px;top:1030px;" width="40" height="36" viewBox="0 0 40 36"><circle cx="16" cy="20" r="15" fill="#5865f2"/><path d="M8 15c3-2 13-2 16 0 2 3 3 7 3 10-2 1.500-4 2-5 2l-1.200-2h-9.600l-1.200 2c-1 0-3-0.500-5-2 0-3 1-7 3-10z" fill="#fff"/><ellipse cx="12.500" cy="21" rx="2" ry="2.400" fill="#5865f2"/><ellipse cx="19.500" cy="21" rx="2" ry="2.400" fill="#5865f2"/><circle cx="28" cy="9" r="9" fill="#e23b3b"/></svg>
<span class="t" style="left:470px;width:400px;text-align:center;top:1028.50px;height:20px;line-height:20px;font-size:11.5px;color:#fff;letter-spacing:-0.25px;font-weight:bold;letter-spacing:0;">9+</span>
<div style="left:654px;top:1070.5px;width:8px;height:3px;background:#8c8c8c;border-radius:1.500px;"></div>
<svg style="left:699.5px;top:1037px;" width="29" height="27" viewBox="0 0 29 27"><defs><linearGradient id="cpl" x1="0" y1="0" x2="0" y2="1"><stop offset="0" stop-color="#1ea4ff"/><stop offset="0.3" stop-color="#1a9ce8"/><stop offset="0.6" stop-color="#3cc480"/><stop offset="0.9" stop-color="#f4d818"/><stop offset="1" stop-color="#f8c020"/></linearGradient><linearGradient id="cpr" x1="0" y1="0" x2="0" y2="1"><stop offset="0" stop-color="#a850f4"/><stop offset="0.35" stop-color="#d050c0"/><stop offset="0.65" stop-color="#f45a80"/><stop offset="1" stop-color="#ffa858"/></linearGradient></defs><path d="M14 0.600Q19 0 20.500 4L21.500 7.500H15.500L16 4Q16.500 0.600 14 0.600z" fill="#1b4fe0"/><path d="M6.500 18H12L12 23.500Q11.500 26.500 14 26.500Q9.500 27.300 8 23z" fill="#f0502a"/><path d="M5 0.600H14Q17 0.600 16 4L11.500 17Q11 18.500 9 18.500H3Q-0.500 18.500 0.500 14.500L2.500 4Q3 0.600 5 0.600z" fill="url(#cpl)"/><path d="M18.500 6.600H25Q29 6.600 28 11L25.500 22.500Q24.500 26.500 21 26.500H14Q11 26.500 12 23.500L16.500 9Q17 6.600 18.500 6.600z" fill="url(#cpr)"/></svg>
<svg style="left:753px;top:1036px;" width="32" height="28" viewBox="0 0 32 28"><path d="M1 3a2 2 0 0 1 2-2h8l3 3h15a2 2 0 0 1 2 2v20a1 1 0 0 1-1 1H2a1 1 0 0 1-1-1z" fill="#f0b000"/><path d="M1 7h28a2 2 0 0 1 2 2v17a1 1 0 0 1-1 1H2a1 1 0 0 1-1-1z" fill="#ffd04a"/><path d="M6 21a2 2 0 0 1 2-2h15a2 2 0 0 1 2 2v6H6z" fill="#1a7fe0"/><rect x="9.500" y="21.500" width="12" height="2" rx="1" fill="#0a5cb8"/></svg>
<div style="left:765px;top:1070.5px;width:8px;height:3px;background:#8c8c8c;border-radius:1.500px;"></div>
<svg style="left:808px;top:1034px;" width="32" height="32" viewBox="0 0 32 32"><defs><linearGradient id="eg" x1="0" y1="0" x2="1" y2="0"><stop offset="0" stop-color="#1a8ad8"/><stop offset="0.6" stop-color="#30b8c0"/><stop offset="1" stop-color="#58d860"/></linearGradient></defs><circle cx="16" cy="16" r="15" fill="#1668c0"/><path d="M1.500 14c1-8 7-13 15-13 8.500 0 14.500 6 14 13 0 4-3 7-7 7-3 0-4-1.500-3.500-3 1-2 0.500-4.500-3-5.500-5-1.200-10 1-11 6-2-1-4.500-2-4.500-4.500z" fill="url(#eg)"/><path d="M9 24c-2-5 1-11 7-11 4 0 5.500 2.500 4.500 5-1 2 1 4 4 4 2 0 4-0.500 5-2-2 7-8 11-14 11-4 0-6-4-6.500-7z" fill="#0c59a4"/></svg>
<div style="left:820px;top:1070.5px;width:8px;height:3px;background:#8c8c8c;border-radius:1.500px;"></div>
<svg style="left:863px;top:1034px;" width="31" height="32" viewBox="0 0 31 32"><path d="M9 9V5a2.500 2.500 0 0 1 2.500-2.500h8a2.500 2.500 0 0 1 2.500 2.500v4" fill="none" stroke="#28b0f0" stroke-width="2.400"/><path d="M1 8a2 2 0 0 1 2-2h25a2 2 0 0 1 2 2v19a4 4 0 0 1-4 4H5a4 4 0 0 1-4-4z" fill="#f4f4f4"/><rect x="9.500" y="12.500" width="5.300" height="5.300" fill="#f25022"/><rect x="16.200" y="12.500" width="5.300" height="5.300" fill="#7fba00"/><rect x="9.500" y="19.200" width="5.300" height="5.300" fill="#00a4ef"/><rect x="16.200" y="19.200" width="5.300" height="5.300" fill="#ffb900"/></svg>
<div style="left:874px;top:1070.5px;width:8px;height:3px;background:#8c8c8c;border-radius:1.500px;"></div>
<svg style="left:920px;top:1036px;" width="28" height="29" viewBox="0 0 28 29"><path d="M14 0.500l12.500 7v13.500l-12.500 7.500-12.500-7.500V7.500z" fill="#3a4048"/><path d="M14 0.500l12.500 7-12.500 3z" fill="#6a727c"/><path d="M14 6l8 14-17-2z" fill="#0e1114"/><path d="M5 18l9 10.500 8-8.500z" fill="#4e555e"/><path d="M1.500 7.500l12.500-7v5.500l-9 12-3.500 3z" fill="#525a64"/></svg>
<svg style="left:973.5px;top:1034.5px;" width="31" height="31" viewBox="0 0 31 31"><rect x="0.500" y="0.300" width="30" height="30" rx="2.500" fill="#107c10"/><circle cx="15.500" cy="15.400" r="12.200" fill="#fff"/><path d="M8.500 5.600Q15.500 3.200 22.500 5.600L15.500 10z" fill="#107c10"/><path d="M8.500 5.300Q13 7.500 15.500 9.800Q18 7.500 22.500 5.300L24 7Q19.500 9 17.200 11.300Q24 17 27 20.500L24 25.500Q21 17.500 15.500 13Q10 17.500 7 25.500L4 20.500Q7 17 13.800 11.300Q11.500 9 7 7z" fill="#107c10"/></svg>
<svg style="left:1028px;top:1034px;" width="32" height="31" viewBox="0 0 32 31"><defs><linearGradient id="ma" x1="0" y1="0" x2="1" y2="1"><stop offset="0" stop-color="#0a5cd8"/><stop offset="1" stop-color="#2a90f8"/></linearGradient></defs><rect x="0.500" y="0.500" width="30.500" height="30" fill="url(#ma)"/><path d="M5 23l7-14h3.500l-7 14zM12 23l7-14h3l3.500 14h-3.500l-2-9-4.500 9z" fill="#e8f0ff"/><circle cx="22.500" cy="21.500" r="1.500" fill="#fff"/></svg>
<svg style="left:1083px;top:1035px;" width="34" height="30" viewBox="0 0 34 30"><rect x="2" y="3" width="26" height="20" rx="2" fill="#0a6ac8"/><path d="M0.500 22h29l-1 2h-27z" fill="#1a8ae0"/><rect x="7" y="2" width="12.500" height="26.500" rx="2" fill="#38c0f0"/><rect x="7" y="17" width="12.500" height="11.500" rx="2" fill="#0a78d4"/><rect x="7" y="11" width="12.500" height="7" fill="#20a0e8"/><rect x="10.500" y="4" width="5.500" height="0.800" fill="#d8f4ff"/><circle cx="27" cy="3.800" r="10" fill="#fdd222"/></svg>
<span class="t" style="left:910px;width:400px;text-align:center;top:1029.00px;height:20px;line-height:20px;font-size:14.5px;color:#111;letter-spacing:-0.25px;letter-spacing:0;">3</span>
<div style="left:1095px;top:1070.5px;width:8px;height:3px;background:#8c8c8c;border-radius:1.500px;"></div>
<svg style="left:1138.5px;top:1034.5px;" width="31" height="31" viewBox="0 0 31 31"><rect width="31" height="31" fill="#fff"/><rect x="4.5" y="5.5" width="5" height="6" fill="#e8402a"/><rect x="10.2" y="5.5" width="5" height="6" fill="#f08a1c"/><rect x="15.9" y="5.5" width="5" height="6" fill="#f0a81c"/><rect x="21.6" y="5.5" width="5" height="6" fill="#f08a1c"/><rect x="4.5" y="12.5" width="5" height="6" fill="#8ab83a"/><rect x="10.2" y="12.5" width="5" height="6" fill="#a8c83a"/><rect x="15.9" y="12.5" width="5" height="6" fill="#c8d03a"/><rect x="21.6" y="12.5" width="5" height="6" fill="#a8c83a"/><rect x="4.5" y="19.5" width="5" height="6" fill="#2a78b8"/><rect x="10.2" y="19.5" width="5" height="6" fill="#3a98c8"/><rect x="15.9" y="19.5" width="5" height="6" fill="#5ab8d8"/><rect x="21.6" y="19.5" width="5" height="6" fill="#7ac8e0"/></svg>
<div style="left:1150px;top:1070.5px;width:8px;height:3px;background:#8c8c8c;border-radius:1.500px;"></div>
<svg style="left:1193.5px;top:1034.5px;" width="31" height="31" viewBox="0 0 31 31"><rect width="31" height="31" rx="6" fill="#3232b6"/><path d="M15.500 6l9 5v10l-9 5-9-5V11z" fill="none" stroke="#fff" stroke-width="1.600"/><path d="M15.500 26V16l9-5M15.500 16h3v5.500l6-3" fill="none" stroke="#fff" stroke-width="1.600"/></svg>
<div style="left:1205px;top:1070.5px;width:8px;height:3px;background:#8c8c8c;border-radius:1.500px;"></div>
<svg style="left:1250px;top:1035px;" width="30" height="30" viewBox="0 0 30 30"><path d="M14 0.800l12.500 7v13.500l-12.500 7-12.500-7V7.800z" fill="#1a5cf0"/><path d="M14 6l6 3-6 3-6-3z" fill="#fff"/><path d="M6 12l6.500 3.500v8l-2-1v-2.500l-2.500-1.300v2.500l-2-1zM8 15.500v2.300l2.500 1.300v-2.300zM22 12v3l-4.500 2.500v2.500l4.500-2.500v3l-6.500 3.500v-8.500z" fill="#fff"/><rect x="18" y="22.500" width="10.500" height="5" rx="1" fill="#1a5cf0" stroke="#cfe0ff" stroke-width="0.600"/></svg>
<svg style="left:1303px;top:1034.5px;" width="31" height="31" viewBox="0 0 31 31"><circle cx="15.500" cy="15.500" r="15" fill="#1ed760"/><path d="M7 10.800c5.500-1.700 12-1.200 17 1.700" fill="none" stroke="#111" stroke-width="2.800" stroke-linecap="round"/><path d="M8 15.700c4.500-1.300 10-0.800 14.300 1.700" fill="none" stroke="#111" stroke-width="2.300" stroke-linecap="round"/><path d="M9 20.300c4-1 8-0.600 11.500 1.400" fill="none" stroke="#111" stroke-width="1.900" stroke-linecap="round"/></svg>
<div style="left:1314px;top:1070.5px;width:8px;height:3px;background:#8c8c8c;border-radius:1.500px;"></div>
<svg style="left:1359px;top:1035px;" width="30" height="30" viewBox="0 0 20 20"><defs><linearGradient id="lbg2" x1="0" y1="0" x2="1" y2="1"><stop offset="0" stop-color="#5c2e2a"/><stop offset="0.4" stop-color="#84141e"/><stop offset="0.7" stop-color="#a4161f"/><stop offset="1" stop-color="#ff1a22"/></linearGradient></defs><rect x="0" y="0" width="20" height="20" rx="1.500" fill="url(#lbg2)"/><path d="M0.200 5.800C2.500 1 11 0.300 15 6.200L13.200 6.700C10 2.800 4 3 0.300 7.500z" fill="#fff"/><path d="M2 14.800l3.500-2.300-0.800-0.800 2.300-1.500c0.500-1.500 2.500-2.800 4.500-2.500 3.500 0.500 5 4 4.800 8 0 1.500-0.300 3-0.700 4.300H7.500c2-1 3.200-2 3.500-3.800-1.500 1.200-3 1.500-4.500 1l-1.800 0.800 0.500-1.300-2 0.300 1-1.300z" fill="#fff"/><circle cx="7.700" cy="11.300" r="0.600" fill="#8a1520"/></svg>
<div style="left:1369.5px;top:1070.5px;width:8px;height:3px;background:#8c8c8c;border-radius:1.500px;"></div>
<svg style="left:1413.5px;top:1036.5px;" width="31" height="27" viewBox="0 0 31 27"><defs><linearGradient id="sky" x1="0" y1="0" x2="0" y2="1"><stop offset="0" stop-color="#2a78d8"/><stop offset="1" stop-color="#a8d0f4"/></linearGradient></defs><rect x="0.500" y="0.500" width="26" height="20.500" fill="url(#sky)" stroke="#d8d8d8" stroke-width="1"/><rect x="1" y="13" width="25" height="7.500" fill="#5a9a2a"/><rect x="10" y="10" width="16.500" height="11" fill="#1c2a1c"/><rect x="12" y="12.500" width="7" height="5.500" fill="#6aa83a"/><rect x="17" y="16.500" width="7" height="5.500" fill="#7ab83a"/><rect x="24" y="20" width="6.500" height="6" fill="#6aa030" stroke="#a8c878" stroke-width="0.800"/></svg>
<div style="left:1424.5px;top:1070.5px;width:8px;height:3px;background:#8c8c8c;border-radius:1.500px;"></div>
<svg style="left:1608px;top:1044px;" width="17" height="12" viewBox="0 0 17 12"><path d="M1.500 9.500l7-7 7 7" fill="none" stroke="#f4f4f4" stroke-width="1.800"/></svg>
<svg style="left:1645px;top:1042px;" width="22" height="15" viewBox="0 0 22 15"><defs><linearGradient id="cl" x1="0" y1="0" x2="1" y2="1"><stop offset="0" stop-color="#f0f0f0"/><stop offset="1" stop-color="#9a9a9a"/></linearGradient></defs><path d="M5.500 14a4.500 4.500 0 0 1-0.800-8.900 6 6 0 0 1 11-1.300 5 5 0 0 1 1.800 10.200z" fill="url(#cl)"/></svg>
<svg style="left:1686px;top:1042px;" width="19" height="16" viewBox="0 0 19 16"><g fill="#f4f4f4"><path d="M5 0l4.500 3-4.500 3-4.500-3zM14 0l4.500 3-4.500 3-4.500-3zM5 6l4.500 3-4.500 3-4.500-3zM14 6l4.500 3-4.500 3-4.500-3zM9.500 10.300l4.500 3-4.500 3-4.500-3z"/></g></svg>
<svg style="left:1725px;top:1041px;" width="22" height="17" viewBox="0 0 22 17"><g fill="none" stroke="#f4f4f4" stroke-width="1.700" stroke-linecap="round"><path d="M1.500 6.500a14 14 0 0 1 19 0"/><path d="M4.800 10a9.300 9.300 0 0 1 12.400 0"/><path d="M8 13.300a4.500 4.500 0 0 1 6 0"/></g><circle cx="11" cy="15.500" r="1.300" fill="#f4f4f4"/></svg>
<svg style="left:1755px;top:1040px;" width="22" height="19" viewBox="0 0 22 19"><path d="M1.500 6.500h3.500l4.500-4.500v15l-4.500-4.500h-3.500z" fill="none" stroke="#f4f4f4" stroke-width="1.500" stroke-linejoin="round"/><g fill="none" stroke="#f4f4f4" stroke-width="1.500" stroke-linecap="round"><path d="M12.500 6.500a4 4 0 0 1 0 6"/><path d="M15 3.800a8 8 0 0 1 0 11.500"/><path d="M17.700 1.300a12 12 0 0 1 0 16.500"/></g></svg>
<svg style="left:1785px;top:1039px;" width="22" height="19" viewBox="0 0 22 19"><rect x="1.500" y="5.500" width="16.500" height="11" rx="2.500" fill="none" stroke="#f4f4f4" stroke-width="1.600"/><rect x="19" y="8.500" width="2" height="5" rx="1" fill="#f4f4f4"/><rect x="4" y="8" width="11.500" height="6" rx="1" fill="#f4f4f4"/><path d="M5.500 0.500l-3.500 7h3l-1 5 4-7h-3z" fill="#f4f4f4" stroke="#1c1c1c" stroke-width="0.800"/></svg>
<span class="t" style="left:1496px;width:400px;text-align:right;top:1029.70px;height:20px;line-height:20px;font-size:15px;color:#ffffff;letter-spacing:0.130px;">11:37 AM</span>
<span class="t" style="left:1496px;width:400px;text-align:right;top:1049.70px;height:20px;line-height:20px;font-size:15px;color:#ffffff;letter-spacing:0.175px;">12/7/2025</span>
</div></body></html>
